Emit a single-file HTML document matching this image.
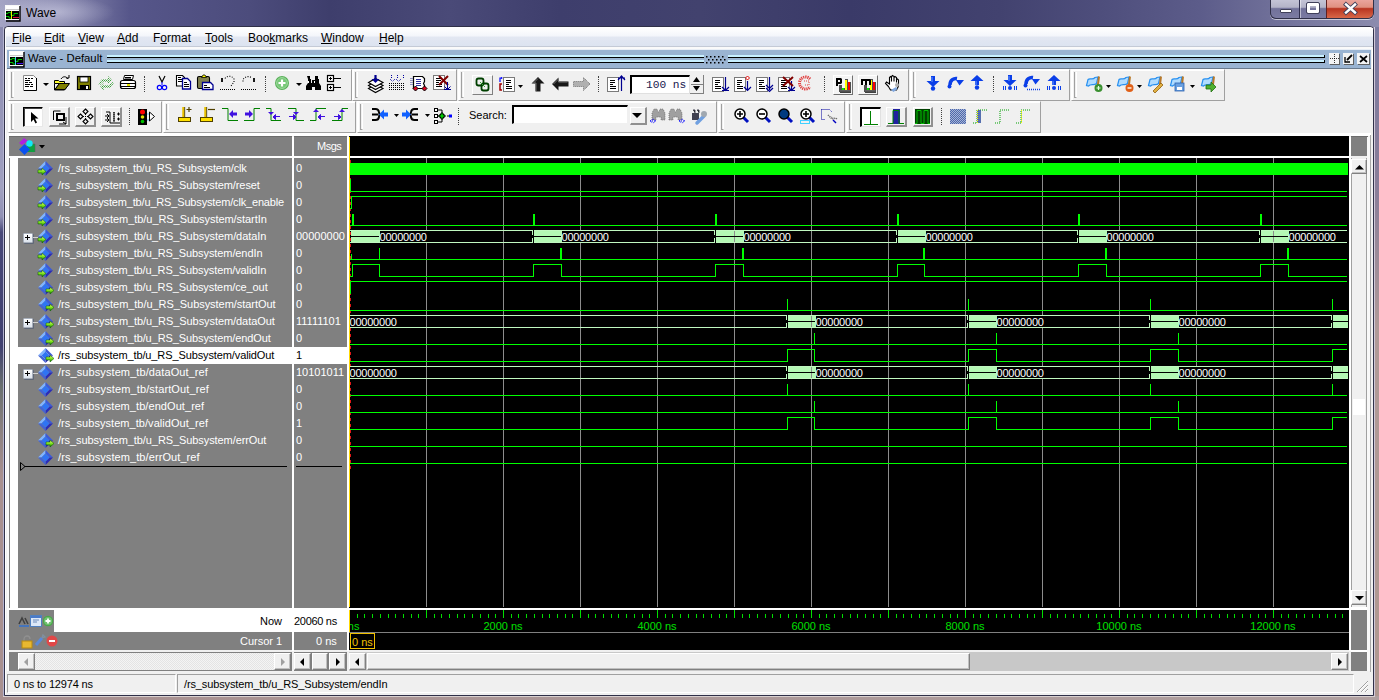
<!DOCTYPE html><html><head><meta charset="utf-8"><style>
*{margin:0;padding:0;box-sizing:border-box}
html,body{width:1379px;height:700px;overflow:hidden;background:#8a7f86;font-family:"Liberation Sans",sans-serif;font-size:11px;color:#000}
.ab{position:absolute}
.t{position:absolute;white-space:pre;line-height:1}
svg{position:absolute;overflow:visible}
.tb{position:absolute;border-top:1px solid #fff;border-left:1px solid #fff;border-right:1px solid #a0a0a0;border-bottom:1px solid #a0a0a0;box-shadow:1px 1px 0 #fff inset}
.hd{position:absolute;width:3px;border-left:1px solid #a0a0a0;border-right:1px solid #fff;border-bottom:1px solid #a0a0a0}
.sep{position:absolute;width:1px;border-left:1px dotted #404040}
.btn{position:absolute;background:#f0f0f0;border-top:1px solid #fff;border-left:1px solid #fff;border-right:1px solid #808080;border-bottom:1px solid #808080}

</style></head><body>
<div class="ab" style="left:0px;top:0px;width:1379px;height:700px;background:linear-gradient(180deg,#8e8aa6 0%,#9a8c96 60%,#a48e8e 100%)"></div>
<div class="ab" style="left:0px;top:0px;width:1379px;height:27px;background:linear-gradient(90deg,#a4a4c4 0.0%,#8a8ab0 4.4%,#56568a 9.4%,#4c4c7c 18.1%,#3e3e6c 23.9%,#4a4a78 32.6%,#3e3e6c 40.6%,#42426e 50.8%,#3a3a68 61.6%,#42426f 72.5%,#4e4e7c 79.8%,#5c5c8a 87.0%,#8c8cae 100.0%)"></div>
<div class="ab" style="left:0px;top:0px;width:200px;height:27px;background:radial-gradient(ellipse 60px 16px at 55px 12px,rgba(215,215,235,.55),rgba(215,215,235,0))"></div>
<div class="ab" style="left:0px;top:27px;width:4px;height:673px;background:linear-gradient(180deg,#8a8ab0 0.0%,#a0a0c0 23.8%,#9090b4 28.2%,#484878 30.5%,#404070 47.5%,#6a7070 53.5%,#8a8080 59.4%,#a89090 66.9%,#a89090 100.0%)"></div>
<div class="ab" style="left:3px;top:27px;width:1px;height:669px;background:#b4b4d0"></div>
<div class="ab" style="left:1374px;top:27px;width:5px;height:673px;background:linear-gradient(180deg,#7a7aa0 0%,#8a7e98 25%,#b09a98 45%,#b09890 100%)"></div>
<div class="ab" style="left:1374px;top:27px;width:1px;height:669px;background:#d0c8d8"></div>
<div class="ab" style="left:0px;top:696px;width:1379px;height:4px;background:linear-gradient(90deg,#a89090,#b0a0a0)"></div>
<div class="ab" style="left:3px;top:696px;width:1372px;height:1px;background:#d8d0d0"></div>
<svg style="left:5px;top:5px;" width="16" height="17" viewBox="0 0 16 17"><rect x="0" y="0" width="15" height="15" fill="#f8f8f8"/><path d="M15 1v15H1" stroke="#000" stroke-width="1.4" fill="none"/><rect x="1" y="1" width="13" height="3" fill="#fff"/><path d="M1 4.5h13" stroke="#c8c8c8"/><rect x="1" y="6" width="13" height="8" fill="#000"/><path d="M1 8.5h2v-1h3v3h3v-2h4M1 11.5h3v1.5h2" stroke="#00c000" fill="none"/><path d="M6.5 6v8" stroke="#f0f000"/><path d="M8 12.5h6" stroke="#e0104a"/></svg>
<div class="t" style="left:26px;top:7px;font-size:12px;color:#000">Wave</div>
<div class="ab" style="left:1270px;top:0px;width:104px;height:19px;border:1px solid #303048;border-top:none;border-radius:0 0 6px 6px;background:linear-gradient(180deg,#c4c4d6 0%,#b4b4c8 40%,#72729a 48%,#7a7aa2 100%);overflow:hidden;box-shadow:0 1px 0 rgba(255,255,255,.6)"><div class="ab" style="left:55px;top:0;width:48px;height:18px;background:linear-gradient(180deg,#eaa49c 0%,#e09080 40%,#b83420 48%,#d86848 100%);border-left:1px solid #602020"></div><div class="ab" style="left:28px;top:0;width:1px;height:18px;background:#303050;box-shadow:1px 0 0 rgba(255,255,255,.5)"></div></div>
<div class="ab" style="left:1280px;top:9px;width:12px;height:4px;background:#fff;border:1px solid #40405a;border-radius:1px"></div>
<div class="ab" style="left:1307px;top:3px;width:12px;height:10px;border:3px solid #fff;outline:1px solid #40405a;background:transparent;border-radius:1px"></div>
<svg style="left:1344px;top:3px;" width="13" height="11" viewBox="0 0 13 11"><path d="M2 1.5L11 9.5M11 1.5L2 9.5" stroke="#40405a" stroke-width="4.2" stroke-linecap="square"/><path d="M2 1.5L11 9.5M11 1.5L2 9.5" stroke="#fff" stroke-width="2.4" stroke-linecap="square"/></svg>
<div class="ab" style="left:4px;top:26px;width:1370px;height:670px;background:#f0f0f0;border:1px solid #303048;border-radius:4px 4px 0 0"></div>
<div class="ab" style="left:5px;top:27px;width:1368px;height:668px;border:1px solid #fff;border-radius:3px 3px 0 0"></div>
<div class="ab" style="left:6px;top:28px;width:1367px;height:19px;background:linear-gradient(180deg,#ffffff 0%,#f4f6fb 40%,#e2e7f2 50%,#dce3f0 100%)"></div>
<div class="ab" style="left:6px;top:46px;width:1367px;height:1px;background:#c4cad6"></div>
<div class="ab" style="left:6px;top:47px;width:1367px;height:2px;background:#fafafa"></div>
<div class="t" style="left:12px;top:32px;font-size:12px;color:#000"><u>F</u>ile</div>
<div class="t" style="left:44px;top:32px;font-size:12px;color:#000"><u>E</u>dit</div>
<div class="t" style="left:78px;top:32px;font-size:12px;color:#000"><u>V</u>iew</div>
<div class="t" style="left:117px;top:32px;font-size:12px;color:#000"><u>A</u>dd</div>
<div class="t" style="left:153px;top:32px;font-size:12px;color:#000">F<u>o</u>rmat</div>
<div class="t" style="left:205px;top:32px;font-size:12px;color:#000"><u>T</u>ools</div>
<div class="t" style="left:248px;top:32px;font-size:12px;color:#000">Boo<u>k</u>marks</div>
<div class="t" style="left:321px;top:32px;font-size:12px;color:#000"><u>W</u>indow</div>
<div class="t" style="left:379px;top:32px;font-size:12px;color:#000"><u>H</u>elp</div>
<div class="ab" style="left:7px;top:49px;width:1364px;height:20px;background:#9ab4d2;border-top:1px solid #e8eef6;border-bottom:1px solid #6a7a8c"></div>
<svg style="left:9px;top:51px;" width="16" height="17" viewBox="0 0 16 17"><rect x="0" y="0" width="15" height="15" fill="#f8f8f8"/><path d="M15 1v15H1" stroke="#000" stroke-width="1.4" fill="none"/><rect x="1" y="1" width="13" height="3" fill="#fff"/><path d="M1 4.5h13" stroke="#c8c8c8"/><rect x="1" y="6" width="13" height="8" fill="#000"/><path d="M1 8.5h2v-1h3v3h3v-2h4M1 11.5h3v1.5h2" stroke="#00c000" fill="none"/><path d="M6.5 6v8" stroke="#30e0f0"/><path d="M8 12.5h6" stroke="#4010f0"/></svg>
<div class="t" style="left:28px;top:53px;font-size:11.3px;color:#000">Wave - Default</div>
<div class="ab" style="left:107px;top:55px;width:597px;height:2px;background:#c8f0ff"></div>
<div class="ab" style="left:107px;top:57px;width:597px;height:1px;background:#000"></div>
<div class="ab" style="left:107px;top:60px;width:597px;height:2px;background:#c8f0ff"></div>
<div class="ab" style="left:107px;top:62px;width:597px;height:1px;background:#000"></div>
<div class="ab" style="left:728px;top:55px;width:597px;height:2px;background:#c8f0ff"></div>
<div class="ab" style="left:728px;top:57px;width:597px;height:1px;background:#000"></div>
<div class="ab" style="left:728px;top:60px;width:597px;height:2px;background:#c8f0ff"></div>
<div class="ab" style="left:728px;top:62px;width:597px;height:1px;background:#000"></div>
<div class="ab" style="left:1324px;top:55px;width:1px;height:3px;background:#000"></div>
<div class="ab" style="left:1324px;top:60px;width:1px;height:3px;background:#000"></div>
<svg style="left:705px;top:55px;" width="22" height="9" viewBox="0 0 22 9"><rect x="1" y="1" width="1.5" height="1.5" fill="#000"/><rect x="3" y="4" width="1.5" height="1.5" fill="#000"/><rect x="1" y="7" width="1.5" height="1.5" fill="#000"/><rect x="5" y="1" width="1.5" height="1.5" fill="#000"/><rect x="7" y="4" width="1.5" height="1.5" fill="#000"/><rect x="5" y="7" width="1.5" height="1.5" fill="#000"/><rect x="9" y="1" width="1.5" height="1.5" fill="#000"/><rect x="11" y="4" width="1.5" height="1.5" fill="#000"/><rect x="9" y="7" width="1.5" height="1.5" fill="#000"/><rect x="13" y="1" width="1.5" height="1.5" fill="#000"/><rect x="15" y="4" width="1.5" height="1.5" fill="#000"/><rect x="13" y="7" width="1.5" height="1.5" fill="#000"/><rect x="17" y="1" width="1.5" height="1.5" fill="#000"/><rect x="19" y="4" width="1.5" height="1.5" fill="#000"/><rect x="17" y="7" width="1.5" height="1.5" fill="#000"/></svg>
<div class="ab" style="left:1329px;top:53px;width:10px;height:11px;background:#f4f4f4;box-shadow:1px 1px 0 #606060"></div>
<div class="ab" style="left:1343px;top:53px;width:10px;height:11px;background:#f4f4f4;box-shadow:1px 1px 0 #606060"></div>
<div class="ab" style="left:1357px;top:53px;width:12px;height:11px;background:#f4f4f4;box-shadow:1px 1px 0 #606060"></div>
<svg style="left:1359px;top:55px;" width="9" height="8" viewBox="0 0 9 8"><path d="M1 1l7 6M8 1l-7 6" stroke="#000" stroke-width="1.7"/></svg>
<svg style="left:1344px;top:54px;" width="9" height="9" viewBox="0 0 9 9"><path d="M1 3v5h5" stroke="#000" fill="none" stroke-width="1.3"/><path d="M3 6l5-5" stroke="#000" stroke-width="1.8"/></svg>
<svg style="left:1330px;top:54px;" width="9" height="9" viewBox="0 0 9 9"><path d="M4.5 0v9M0 4.5h9" stroke="#000" stroke-width=".8" stroke-dasharray="1 1"/></svg>
<div class="ab" style="left:6px;top:69px;width:1367px;height:64px;background:#f0f0f0"></div>
<div class="tb" style="left:8px;top:69px;width:344px;height:32px"></div>
<div class="hd" style="left:11px;top:72px;height:26px"></div>
<div class="tb" style="left:352px;top:69px;width:105px;height:32px"></div>
<div class="hd" style="left:355px;top:72px;height:26px"></div>
<div class="tb" style="left:458px;top:69px;width:451px;height:32px"></div>
<div class="hd" style="left:461px;top:72px;height:26px"></div>
<div class="tb" style="left:910px;top:69px;width:160px;height:32px"></div>
<div class="hd" style="left:913px;top:72px;height:26px"></div>
<div class="tb" style="left:1071px;top:69px;width:154px;height:32px"></div>
<div class="hd" style="left:1074px;top:72px;height:26px"></div>
<div class="tb" style="left:8px;top:101px;width:154px;height:32px"></div>
<div class="hd" style="left:11px;top:104px;height:26px"></div>
<div class="tb" style="left:163px;top:101px;width:193px;height:32px"></div>
<div class="hd" style="left:166px;top:104px;height:26px"></div>
<div class="tb" style="left:357px;top:101px;width:360px;height:32px"></div>
<div class="hd" style="left:360px;top:104px;height:26px"></div>
<div class="tb" style="left:718px;top:101px;width:127px;height:32px"></div>
<div class="hd" style="left:721px;top:104px;height:26px"></div>
<div class="tb" style="left:846px;top:101px;width:195px;height:32px"></div>
<div class="hd" style="left:849px;top:104px;height:26px"></div>
<div class="sep" style="left:144px;top:76px;height:16px"></div>
<div class="sep" style="left:265px;top:76px;height:16px"></div>
<div class="sep" style="left:598px;top:76px;height:16px"></div>
<div class="sep" style="left:824px;top:76px;height:16px"></div>
<div class="sep" style="left:993px;top:76px;height:16px"></div>
<div class="sep" style="left:129px;top:108px;height:17px"></div>
<div class="sep" style="left:458px;top:108px;height:17px"></div>
<div class="sep" style="left:941px;top:108px;height:17px"></div>
<div class="ab" style="left:7px;top:133px;width:1366px;height:539px;background:#f0f0f0"></div>
<div class="ab" style="left:7px;top:133px;width:1364px;height:3px;background:#fff"></div>
<div class="ab" style="left:7px;top:133px;width:2px;height:538px;background:#fafafa"></div>
<div class="ab" style="left:9px;top:136px;width:283px;height:20px;background:#808080;border-top:1px solid #6c6c6c"></div>
<div class="ab" style="left:294px;top:136px;width:53px;height:20px;background:#808080;border-top:1px solid #6c6c6c"></div>
<div class="ab" style="left:349px;top:136px;width:1000px;height:20px;background:#000"></div>
<div class="ab" style="left:1351px;top:136px;width:17px;height:20px;background:#808080;border-top:1px solid #6c6c6c"></div>
<div class="t" style="left:317px;top:141px;color:#fff;font-size:11px;letter-spacing:-0.5px">Msgs</div>
<svg style="left:18px;top:137px;" width="18" height="18" viewBox="0 0 18 18"><path d="M6 1l4 3-6 4-3-2z" fill="#b020e0"/><rect x="9" y="7" width="8" height="8" fill="#10a040"/><path d="M9 7h8v8" fill="none" stroke="#606060" stroke-width=".6"/><circle cx="11.5" cy="6.5" r="3.2" fill="#10e8f8"/><path d="M6.5 7l5.5 5.5-5.5 5.5-5.5-5.5z" fill="#0a50f0"/></svg>
<svg style="left:39px;top:145px;" width="6" height="4" viewBox="0 0 6 4"><path d="M0 0h6l-3 3.5z" fill="#000"/></svg>
<div class="ab" style="left:9px;top:156px;width:1340px;height:2px;background:#fff"></div>
<div class="ab" style="left:292px;top:137px;width:2px;height:514px;background:#fff"></div>
<div class="ab" style="left:347px;top:137px;width:2px;height:514px;background:#fff"></div>
<div class="ab" style="left:1349px;top:137px;width:2px;height:514px;background:#fff"></div>
<div class="ab" style="left:9px;top:158px;width:283px;height:450px;background:#808080"></div>
<div class="ab" style="left:10px;top:158px;width:8px;height:451px;background:#fff"></div>
<div class="ab" style="left:294px;top:158px;width:53px;height:450px;background:#808080"></div>
<div class="ab" style="left:349px;top:158px;width:1000px;height:450px;background:#000"></div>
<svg style="left:38px;top:161px;" width="16" height="16" viewBox="0 0 16 16"><defs><linearGradient id="ag" x1="0" y1="0" x2="0" y2="1"><stop offset="0" stop-color="#f0ff80"/><stop offset=".5" stop-color="#80e020"/><stop offset="1" stop-color="#108000"/></linearGradient></defs><path d="M0 7.5L7.5 0V3.5L3.5 7.5Z" fill="#80b4ff"/><path d="M7.5 0L15 7.5H11.5L7.5 3.5Z" fill="#3c5ad8"/><path d="M15 7.5L7.5 15V11.5L11.5 7.5Z" fill="#2a2cb8"/><path d="M7.5 15L0 7.5H3.5L7.5 11.5Z" fill="#4464d4"/><path d="M7.5 3.5L11.5 7.5L7.5 11.5L3.5 7.5Z" fill="#2f74f4"/><path d="M0 9h4v-2l4 3.5-4 3.5v-2h-4z" fill="url(#ag)" stroke="#0a5a00" stroke-width=".5"/></svg>
<div class="t" style="left:58px;top:163px;color:#fff;font-size:11px;letter-spacing:-0.146px">/rs_subsystem_tb/u_RS_Subsystem/clk</div>
<div class="t" style="left:296px;top:163px;color:#fff;font-size:11px">0</div>
<svg style="left:38px;top:178px;" width="16" height="16" viewBox="0 0 16 16"><defs><linearGradient id="ag" x1="0" y1="0" x2="0" y2="1"><stop offset="0" stop-color="#f0ff80"/><stop offset=".5" stop-color="#80e020"/><stop offset="1" stop-color="#108000"/></linearGradient></defs><path d="M0 7.5L7.5 0V3.5L3.5 7.5Z" fill="#80b4ff"/><path d="M7.5 0L15 7.5H11.5L7.5 3.5Z" fill="#3c5ad8"/><path d="M15 7.5L7.5 15V11.5L11.5 7.5Z" fill="#2a2cb8"/><path d="M7.5 15L0 7.5H3.5L7.5 11.5Z" fill="#4464d4"/><path d="M7.5 3.5L11.5 7.5L7.5 11.5L3.5 7.5Z" fill="#2f74f4"/><path d="M0 9h4v-2l4 3.5-4 3.5v-2h-4z" fill="url(#ag)" stroke="#0a5a00" stroke-width=".5"/></svg>
<div class="t" style="left:58px;top:180px;color:#fff;font-size:11px;letter-spacing:-0.081px">/rs_subsystem_tb/u_RS_Subsystem/reset</div>
<div class="t" style="left:296px;top:180px;color:#fff;font-size:11px">0</div>
<svg style="left:38px;top:195px;" width="16" height="16" viewBox="0 0 16 16"><defs><linearGradient id="ag" x1="0" y1="0" x2="0" y2="1"><stop offset="0" stop-color="#f0ff80"/><stop offset=".5" stop-color="#80e020"/><stop offset="1" stop-color="#108000"/></linearGradient></defs><path d="M0 7.5L7.5 0V3.5L3.5 7.5Z" fill="#80b4ff"/><path d="M7.5 0L15 7.5H11.5L7.5 3.5Z" fill="#3c5ad8"/><path d="M15 7.5L7.5 15V11.5L11.5 7.5Z" fill="#2a2cb8"/><path d="M7.5 15L0 7.5H3.5L7.5 11.5Z" fill="#4464d4"/><path d="M7.5 3.5L11.5 7.5L7.5 11.5L3.5 7.5Z" fill="#2f74f4"/><path d="M0 9h4v-2l4 3.5-4 3.5v-2h-4z" fill="url(#ag)" stroke="#0a5a00" stroke-width=".5"/></svg>
<div class="t" style="left:58px;top:197px;color:#fff;font-size:11px;letter-spacing:-0.166px">/rs_subsystem_tb/u_RS_Subsystem/clk_enable</div>
<div class="t" style="left:296px;top:197px;color:#fff;font-size:11px">0</div>
<svg style="left:38px;top:212px;" width="16" height="16" viewBox="0 0 16 16"><defs><linearGradient id="ag" x1="0" y1="0" x2="0" y2="1"><stop offset="0" stop-color="#f0ff80"/><stop offset=".5" stop-color="#80e020"/><stop offset="1" stop-color="#108000"/></linearGradient></defs><path d="M0 7.5L7.5 0V3.5L3.5 7.5Z" fill="#80b4ff"/><path d="M7.5 0L15 7.5H11.5L7.5 3.5Z" fill="#3c5ad8"/><path d="M15 7.5L7.5 15V11.5L11.5 7.5Z" fill="#2a2cb8"/><path d="M7.5 15L0 7.5H3.5L7.5 11.5Z" fill="#4464d4"/><path d="M7.5 3.5L11.5 7.5L7.5 11.5L3.5 7.5Z" fill="#2f74f4"/><path d="M0 9h4v-2l4 3.5-4 3.5v-2h-4z" fill="url(#ag)" stroke="#0a5a00" stroke-width=".5"/></svg>
<div class="t" style="left:58px;top:214px;color:#fff;font-size:11px;letter-spacing:-0.055px">/rs_subsystem_tb/u_RS_Subsystem/startIn</div>
<div class="t" style="left:296px;top:214px;color:#fff;font-size:11px">0</div>
<svg style="left:38px;top:229px;" width="16" height="16" viewBox="0 0 16 16"><defs><linearGradient id="ag" x1="0" y1="0" x2="0" y2="1"><stop offset="0" stop-color="#f0ff80"/><stop offset=".5" stop-color="#80e020"/><stop offset="1" stop-color="#108000"/></linearGradient></defs><path d="M0 7.5L7.5 0V3.5L3.5 7.5Z" fill="#80b4ff"/><path d="M7.5 0L15 7.5H11.5L7.5 3.5Z" fill="#3c5ad8"/><path d="M15 7.5L7.5 15V11.5L11.5 7.5Z" fill="#2a2cb8"/><path d="M7.5 15L0 7.5H3.5L7.5 11.5Z" fill="#4464d4"/><path d="M7.5 3.5L11.5 7.5L7.5 11.5L3.5 7.5Z" fill="#2f74f4"/><path d="M0 9h4v-2l4 3.5-4 3.5v-2h-4z" fill="url(#ag)" stroke="#0a5a00" stroke-width=".5"/></svg>
<div class="t" style="left:58px;top:231px;color:#fff;font-size:11px;letter-spacing:-0.07px">/rs_subsystem_tb/u_RS_Subsystem/dataIn</div>
<div class="t" style="left:296px;top:231px;color:#fff;font-size:11px">00000000</div>
<div class="ab" style="left:23px;top:233px;width:10px;height:10px;background:linear-gradient(180deg,#ffffff,#dde4ee);border:1px solid #a8b0bc;border-radius:1px;box-shadow:1px 1px 0 #606878"></div>
<div class="ab" style="left:25px;top:237px;width:5px;height:1px;background:#000"></div>
<div class="ab" style="left:27px;top:235px;width:1px;height:5px;background:#000"></div>
<div class="ab" style="left:33px;top:237px;width:5px;height:1px;background:#d0d0d0"></div>
<svg style="left:38px;top:246px;" width="16" height="16" viewBox="0 0 16 16"><defs><linearGradient id="ag" x1="0" y1="0" x2="0" y2="1"><stop offset="0" stop-color="#f0ff80"/><stop offset=".5" stop-color="#80e020"/><stop offset="1" stop-color="#108000"/></linearGradient></defs><path d="M0 7.5L7.5 0V3.5L3.5 7.5Z" fill="#80b4ff"/><path d="M7.5 0L15 7.5H11.5L7.5 3.5Z" fill="#3c5ad8"/><path d="M15 7.5L7.5 15V11.5L11.5 7.5Z" fill="#2a2cb8"/><path d="M7.5 15L0 7.5H3.5L7.5 11.5Z" fill="#4464d4"/><path d="M7.5 3.5L11.5 7.5L7.5 11.5L3.5 7.5Z" fill="#2f74f4"/><path d="M0 9h4v-2l4 3.5-4 3.5v-2h-4z" fill="url(#ag)" stroke="#0a5a00" stroke-width=".5"/></svg>
<div class="t" style="left:58px;top:248px;color:#fff;font-size:11px;letter-spacing:-0.094px">/rs_subsystem_tb/u_RS_Subsystem/endIn</div>
<div class="t" style="left:296px;top:248px;color:#fff;font-size:11px">0</div>
<svg style="left:38px;top:263px;" width="16" height="16" viewBox="0 0 16 16"><defs><linearGradient id="ag" x1="0" y1="0" x2="0" y2="1"><stop offset="0" stop-color="#f0ff80"/><stop offset=".5" stop-color="#80e020"/><stop offset="1" stop-color="#108000"/></linearGradient></defs><path d="M0 7.5L7.5 0V3.5L3.5 7.5Z" fill="#80b4ff"/><path d="M7.5 0L15 7.5H11.5L7.5 3.5Z" fill="#3c5ad8"/><path d="M15 7.5L7.5 15V11.5L11.5 7.5Z" fill="#2a2cb8"/><path d="M7.5 15L0 7.5H3.5L7.5 11.5Z" fill="#4464d4"/><path d="M7.5 3.5L11.5 7.5L7.5 11.5L3.5 7.5Z" fill="#2f74f4"/><path d="M0 9h4v-2l4 3.5-4 3.5v-2h-4z" fill="url(#ag)" stroke="#0a5a00" stroke-width=".5"/></svg>
<div class="t" style="left:58px;top:265px;color:#fff;font-size:11px;letter-spacing:-0.099px">/rs_subsystem_tb/u_RS_Subsystem/validIn</div>
<div class="t" style="left:296px;top:265px;color:#fff;font-size:11px">0</div>
<svg style="left:38px;top:280px;" width="16" height="16" viewBox="0 0 16 16"><defs><linearGradient id="ag" x1="0" y1="0" x2="0" y2="1"><stop offset="0" stop-color="#f0ff80"/><stop offset=".5" stop-color="#80e020"/><stop offset="1" stop-color="#108000"/></linearGradient></defs><path d="M0 7.5L7.5 0V3.5L3.5 7.5Z" fill="#80b4ff"/><path d="M7.5 0L15 7.5H11.5L7.5 3.5Z" fill="#3c5ad8"/><path d="M15 7.5L7.5 15V11.5L11.5 7.5Z" fill="#2a2cb8"/><path d="M7.5 15L0 7.5H3.5L7.5 11.5Z" fill="#4464d4"/><path d="M7.5 3.5L11.5 7.5L7.5 11.5L3.5 7.5Z" fill="#2f74f4"/><path d="M8 9h4v-2l4 3.5-4 3.5v-2h-4z" fill="url(#ag)" stroke="#0a5a00" stroke-width=".5"/></svg>
<div class="t" style="left:58px;top:282px;color:#fff;font-size:11px;letter-spacing:-0.1px">/rs_subsystem_tb/u_RS_Subsystem/ce_out</div>
<div class="t" style="left:296px;top:282px;color:#fff;font-size:11px">0</div>
<svg style="left:38px;top:297px;" width="16" height="16" viewBox="0 0 16 16"><defs><linearGradient id="ag" x1="0" y1="0" x2="0" y2="1"><stop offset="0" stop-color="#f0ff80"/><stop offset=".5" stop-color="#80e020"/><stop offset="1" stop-color="#108000"/></linearGradient></defs><path d="M0 7.5L7.5 0V3.5L3.5 7.5Z" fill="#80b4ff"/><path d="M7.5 0L15 7.5H11.5L7.5 3.5Z" fill="#3c5ad8"/><path d="M15 7.5L7.5 15V11.5L11.5 7.5Z" fill="#2a2cb8"/><path d="M7.5 15L0 7.5H3.5L7.5 11.5Z" fill="#4464d4"/><path d="M7.5 3.5L11.5 7.5L7.5 11.5L3.5 7.5Z" fill="#2f74f4"/><path d="M8 9h4v-2l4 3.5-4 3.5v-2h-4z" fill="url(#ag)" stroke="#0a5a00" stroke-width=".5"/></svg>
<div class="t" style="left:58px;top:299px;color:#fff;font-size:11px;letter-spacing:-0.05px">/rs_subsystem_tb/u_RS_Subsystem/startOut</div>
<div class="t" style="left:296px;top:299px;color:#fff;font-size:11px">0</div>
<svg style="left:38px;top:314px;" width="16" height="16" viewBox="0 0 16 16"><defs><linearGradient id="ag" x1="0" y1="0" x2="0" y2="1"><stop offset="0" stop-color="#f0ff80"/><stop offset=".5" stop-color="#80e020"/><stop offset="1" stop-color="#108000"/></linearGradient></defs><path d="M0 7.5L7.5 0V3.5L3.5 7.5Z" fill="#80b4ff"/><path d="M7.5 0L15 7.5H11.5L7.5 3.5Z" fill="#3c5ad8"/><path d="M15 7.5L7.5 15V11.5L11.5 7.5Z" fill="#2a2cb8"/><path d="M7.5 15L0 7.5H3.5L7.5 11.5Z" fill="#4464d4"/><path d="M7.5 3.5L11.5 7.5L7.5 11.5L3.5 7.5Z" fill="#2f74f4"/><path d="M8 9h4v-2l4 3.5-4 3.5v-2h-4z" fill="url(#ag)" stroke="#0a5a00" stroke-width=".5"/></svg>
<div class="t" style="left:58px;top:316px;color:#fff;font-size:11px;letter-spacing:-0.072px">/rs_subsystem_tb/u_RS_Subsystem/dataOut</div>
<div class="t" style="left:296px;top:316px;color:#fff;font-size:11px">11111101</div>
<div class="ab" style="left:23px;top:318px;width:10px;height:10px;background:linear-gradient(180deg,#ffffff,#dde4ee);border:1px solid #a8b0bc;border-radius:1px;box-shadow:1px 1px 0 #606878"></div>
<div class="ab" style="left:25px;top:322px;width:5px;height:1px;background:#000"></div>
<div class="ab" style="left:27px;top:320px;width:1px;height:5px;background:#000"></div>
<div class="ab" style="left:33px;top:322px;width:5px;height:1px;background:#d0d0d0"></div>
<svg style="left:38px;top:331px;" width="16" height="16" viewBox="0 0 16 16"><defs><linearGradient id="ag" x1="0" y1="0" x2="0" y2="1"><stop offset="0" stop-color="#f0ff80"/><stop offset=".5" stop-color="#80e020"/><stop offset="1" stop-color="#108000"/></linearGradient></defs><path d="M0 7.5L7.5 0V3.5L3.5 7.5Z" fill="#80b4ff"/><path d="M7.5 0L15 7.5H11.5L7.5 3.5Z" fill="#3c5ad8"/><path d="M15 7.5L7.5 15V11.5L11.5 7.5Z" fill="#2a2cb8"/><path d="M7.5 15L0 7.5H3.5L7.5 11.5Z" fill="#4464d4"/><path d="M7.5 3.5L11.5 7.5L7.5 11.5L3.5 7.5Z" fill="#2f74f4"/><path d="M8 9h4v-2l4 3.5-4 3.5v-2h-4z" fill="url(#ag)" stroke="#0a5a00" stroke-width=".5"/></svg>
<div class="t" style="left:58px;top:333px;color:#fff;font-size:11px;letter-spacing:-0.096px">/rs_subsystem_tb/u_RS_Subsystem/endOut</div>
<div class="t" style="left:296px;top:333px;color:#fff;font-size:11px">0</div>
<div class="ab" style="left:18px;top:347px;width:274px;height:17px;background:#fff"></div>
<div class="ab" style="left:294px;top:347px;width:53px;height:17px;background:#fff"></div>
<svg style="left:38px;top:348px;" width="16" height="16" viewBox="0 0 16 16"><defs><linearGradient id="ag" x1="0" y1="0" x2="0" y2="1"><stop offset="0" stop-color="#f0ff80"/><stop offset=".5" stop-color="#80e020"/><stop offset="1" stop-color="#108000"/></linearGradient></defs><path d="M0 7.5L7.5 0V3.5L3.5 7.5Z" fill="#80b4ff"/><path d="M7.5 0L15 7.5H11.5L7.5 3.5Z" fill="#3c5ad8"/><path d="M15 7.5L7.5 15V11.5L11.5 7.5Z" fill="#2a2cb8"/><path d="M7.5 15L0 7.5H3.5L7.5 11.5Z" fill="#4464d4"/><path d="M7.5 3.5L11.5 7.5L7.5 11.5L3.5 7.5Z" fill="#2f74f4"/><path d="M8 9h4v-2l4 3.5-4 3.5v-2h-4z" fill="url(#ag)" stroke="#0a5a00" stroke-width=".5"/></svg>
<div class="t" style="left:58px;top:350px;color:#000;font-size:11px;letter-spacing:-0.113px">/rs_subsystem_tb/u_RS_Subsystem/validOut</div>
<div class="t" style="left:296px;top:350px;color:#000;font-size:11px">1</div>
<svg style="left:38px;top:365px;" width="16" height="16" viewBox="0 0 16 16"><defs><linearGradient id="ag" x1="0" y1="0" x2="0" y2="1"><stop offset="0" stop-color="#f0ff80"/><stop offset=".5" stop-color="#80e020"/><stop offset="1" stop-color="#108000"/></linearGradient></defs><path d="M0 7.5L7.5 0V3.5L3.5 7.5Z" fill="#80b4ff"/><path d="M7.5 0L15 7.5H11.5L7.5 3.5Z" fill="#3c5ad8"/><path d="M15 7.5L7.5 15V11.5L11.5 7.5Z" fill="#2a2cb8"/><path d="M7.5 15L0 7.5H3.5L7.5 11.5Z" fill="#4464d4"/><path d="M7.5 3.5L11.5 7.5L7.5 11.5L3.5 7.5Z" fill="#2f74f4"/></svg>
<div class="t" style="left:58px;top:367px;color:#fff;font-size:11px;letter-spacing:0.094px">/rs_subsystem_tb/dataOut_ref</div>
<div class="t" style="left:296px;top:367px;color:#fff;font-size:11px">10101011</div>
<div class="ab" style="left:23px;top:369px;width:10px;height:10px;background:linear-gradient(180deg,#ffffff,#dde4ee);border:1px solid #a8b0bc;border-radius:1px;box-shadow:1px 1px 0 #606878"></div>
<div class="ab" style="left:25px;top:373px;width:5px;height:1px;background:#000"></div>
<div class="ab" style="left:27px;top:371px;width:1px;height:5px;background:#000"></div>
<div class="ab" style="left:33px;top:373px;width:5px;height:1px;background:#d0d0d0"></div>
<svg style="left:38px;top:382px;" width="16" height="16" viewBox="0 0 16 16"><defs><linearGradient id="ag" x1="0" y1="0" x2="0" y2="1"><stop offset="0" stop-color="#f0ff80"/><stop offset=".5" stop-color="#80e020"/><stop offset="1" stop-color="#108000"/></linearGradient></defs><path d="M0 7.5L7.5 0V3.5L3.5 7.5Z" fill="#80b4ff"/><path d="M7.5 0L15 7.5H11.5L7.5 3.5Z" fill="#3c5ad8"/><path d="M15 7.5L7.5 15V11.5L11.5 7.5Z" fill="#2a2cb8"/><path d="M7.5 15L0 7.5H3.5L7.5 11.5Z" fill="#4464d4"/><path d="M7.5 3.5L11.5 7.5L7.5 11.5L3.5 7.5Z" fill="#2f74f4"/></svg>
<div class="t" style="left:58px;top:384px;color:#fff;font-size:11px;letter-spacing:0.123px">/rs_subsystem_tb/startOut_ref</div>
<div class="t" style="left:296px;top:384px;color:#fff;font-size:11px">0</div>
<svg style="left:38px;top:399px;" width="16" height="16" viewBox="0 0 16 16"><defs><linearGradient id="ag" x1="0" y1="0" x2="0" y2="1"><stop offset="0" stop-color="#f0ff80"/><stop offset=".5" stop-color="#80e020"/><stop offset="1" stop-color="#108000"/></linearGradient></defs><path d="M0 7.5L7.5 0V3.5L3.5 7.5Z" fill="#80b4ff"/><path d="M7.5 0L15 7.5H11.5L7.5 3.5Z" fill="#3c5ad8"/><path d="M15 7.5L7.5 15V11.5L11.5 7.5Z" fill="#2a2cb8"/><path d="M7.5 15L0 7.5H3.5L7.5 11.5Z" fill="#4464d4"/><path d="M7.5 3.5L11.5 7.5L7.5 11.5L3.5 7.5Z" fill="#2f74f4"/></svg>
<div class="t" style="left:58px;top:401px;color:#fff;font-size:11px;letter-spacing:0.07px">/rs_subsystem_tb/endOut_ref</div>
<div class="t" style="left:296px;top:401px;color:#fff;font-size:11px">0</div>
<svg style="left:38px;top:416px;" width="16" height="16" viewBox="0 0 16 16"><defs><linearGradient id="ag" x1="0" y1="0" x2="0" y2="1"><stop offset="0" stop-color="#f0ff80"/><stop offset=".5" stop-color="#80e020"/><stop offset="1" stop-color="#108000"/></linearGradient></defs><path d="M0 7.5L7.5 0V3.5L3.5 7.5Z" fill="#80b4ff"/><path d="M7.5 0L15 7.5H11.5L7.5 3.5Z" fill="#3c5ad8"/><path d="M15 7.5L7.5 15V11.5L11.5 7.5Z" fill="#2a2cb8"/><path d="M7.5 15L0 7.5H3.5L7.5 11.5Z" fill="#4464d4"/><path d="M7.5 3.5L11.5 7.5L7.5 11.5L3.5 7.5Z" fill="#2f74f4"/></svg>
<div class="t" style="left:58px;top:418px;color:#fff;font-size:11px;letter-spacing:0.049px">/rs_subsystem_tb/validOut_ref</div>
<div class="t" style="left:296px;top:418px;color:#fff;font-size:11px">1</div>
<svg style="left:38px;top:433px;" width="16" height="16" viewBox="0 0 16 16"><defs><linearGradient id="ag" x1="0" y1="0" x2="0" y2="1"><stop offset="0" stop-color="#f0ff80"/><stop offset=".5" stop-color="#80e020"/><stop offset="1" stop-color="#108000"/></linearGradient></defs><path d="M0 7.5L7.5 0V3.5L3.5 7.5Z" fill="#80b4ff"/><path d="M7.5 0L15 7.5H11.5L7.5 3.5Z" fill="#3c5ad8"/><path d="M15 7.5L7.5 15V11.5L11.5 7.5Z" fill="#2a2cb8"/><path d="M7.5 15L0 7.5H3.5L7.5 11.5Z" fill="#4464d4"/><path d="M7.5 3.5L11.5 7.5L7.5 11.5L3.5 7.5Z" fill="#2f74f4"/><path d="M8 9h4v-2l4 3.5-4 3.5v-2h-4z" fill="url(#ag)" stroke="#0a5a00" stroke-width=".5"/></svg>
<div class="t" style="left:58px;top:435px;color:#fff;font-size:11px;letter-spacing:-0.085px">/rs_subsystem_tb/u_RS_Subsystem/errOut</div>
<div class="t" style="left:296px;top:435px;color:#fff;font-size:11px">0</div>
<svg style="left:38px;top:450px;" width="16" height="16" viewBox="0 0 16 16"><defs><linearGradient id="ag" x1="0" y1="0" x2="0" y2="1"><stop offset="0" stop-color="#f0ff80"/><stop offset=".5" stop-color="#80e020"/><stop offset="1" stop-color="#108000"/></linearGradient></defs><path d="M0 7.5L7.5 0V3.5L3.5 7.5Z" fill="#80b4ff"/><path d="M7.5 0L15 7.5H11.5L7.5 3.5Z" fill="#3c5ad8"/><path d="M15 7.5L7.5 15V11.5L11.5 7.5Z" fill="#2a2cb8"/><path d="M7.5 15L0 7.5H3.5L7.5 11.5Z" fill="#4464d4"/><path d="M7.5 3.5L11.5 7.5L7.5 11.5L3.5 7.5Z" fill="#2f74f4"/></svg>
<div class="t" style="left:58px;top:452px;color:#fff;font-size:11px;letter-spacing:0.086px">/rs_subsystem_tb/errOut_ref</div>
<div class="t" style="left:296px;top:452px;color:#fff;font-size:11px">0</div>
<div class="ab" style="left:20px;top:466px;width:267px;height:1px;background:#000"></div>
<svg style="left:20px;top:462px;" width="6" height="9" viewBox="0 0 6 9"><path d="M.5 .5L5 4.5L.5 8.5Z" fill="#808080" stroke="#000"/></svg>
<div class="ab" style="left:296px;top:466px;width:46px;height:1px;background:#000"></div>
<svg style="left:0px;top:0px;left:0;top:0;shape-rendering:crispEdges" width="1379" height="700" viewBox="0 0 1379 700"><path d="M350.5 160V470" stroke="#e01818" stroke-dasharray="3 3"/><rect x="351" y="230" width="29" height="13" fill="#b4f8b4"/><rect x="534" y="230" width="28" height="13" fill="#b4f8b4"/><rect x="716" y="230" width="28" height="13" fill="#b4f8b4"/><rect x="898" y="230" width="28" height="13" fill="#b4f8b4"/><rect x="1079" y="230" width="28" height="13" fill="#b4f8b4"/><rect x="1261" y="230" width="28" height="13" fill="#b4f8b4"/><rect x="788" y="315" width="28" height="13" fill="#b4f8b4"/><rect x="969" y="315" width="28" height="13" fill="#b4f8b4"/><rect x="1151" y="315" width="28" height="13" fill="#b4f8b4"/><rect x="1333" y="315" width="15" height="13" fill="#b4f8b4"/><rect x="788" y="366" width="28" height="13" fill="#b4f8b4"/><rect x="969" y="366" width="28" height="13" fill="#b4f8b4"/><rect x="1151" y="366" width="28" height="13" fill="#b4f8b4"/><rect x="1333" y="366" width="15" height="13" fill="#b4f8b4"/><path d="M426.5 158V607" stroke="#8c8c8c" stroke-width="1"/><path d="M503.5 158V607" stroke="#8c8c8c" stroke-width="1"/><path d="M580.5 158V607" stroke="#8c8c8c" stroke-width="1"/><path d="M657.5 158V607" stroke="#8c8c8c" stroke-width="1"/><path d="M734.5 158V607" stroke="#8c8c8c" stroke-width="1"/><path d="M811.5 158V607" stroke="#8c8c8c" stroke-width="1"/><path d="M888.5 158V607" stroke="#8c8c8c" stroke-width="1"/><path d="M965.5 158V607" stroke="#8c8c8c" stroke-width="1"/><path d="M1042.5 158V607" stroke="#8c8c8c" stroke-width="1"/><path d="M1119.5 158V607" stroke="#8c8c8c" stroke-width="1"/><path d="M1196.5 158V607" stroke="#8c8c8c" stroke-width="1"/><path d="M1273.5 158V607" stroke="#8c8c8c" stroke-width="1"/><rect x="350" y="163" width="998" height="12" fill="#00ff00"/><path d="M350 179.5H350.5V191.5H1347" stroke="#00ff00" stroke-width="1" fill="none" shape-rendering="crispEdges"/><path d="M350 208.5H351.5V196.5H1347" stroke="#00ff00" stroke-width="1" fill="none" shape-rendering="crispEdges"/><path d="M350 225.5H1347" stroke="#00ff00" stroke-width="1"/><rect x="352" y="214" width="2" height="12" fill="#00ff00"/><rect x="533" y="214" width="2" height="12" fill="#00ff00"/><rect x="715" y="214" width="2" height="12" fill="#00ff00"/><rect x="897" y="214" width="2" height="12" fill="#00ff00"/><rect x="1078" y="214" width="2" height="12" fill="#00ff00"/><rect x="1260" y="214" width="2" height="12" fill="#00ff00"/><path d="M350 259.5H1347" stroke="#00ff00" stroke-width="1"/><rect x="560" y="248" width="2" height="12" fill="#00ff00"/><rect x="742" y="248" width="2" height="12" fill="#00ff00"/><rect x="923" y="248" width="2" height="12" fill="#00ff00"/><rect x="1105" y="248" width="2" height="12" fill="#00ff00"/><rect x="1287" y="248" width="2" height="12" fill="#00ff00"/><rect x="379" y="248" width="1" height="12" fill="#00ff00"/><rect x="351" y="254" width="1" height="6" fill="#00ff00"/><path d="M350 276.5H352.5V264.5H379.5V276.5H533.5V264.5H561.5V276.5H715.5V264.5H743.5V276.5H897.5V264.5H924.5V276.5H1078.5V264.5H1106.5V276.5H1260.5V264.5H1288.5V276.5H1347" stroke="#00ff00" stroke-width="1" fill="none" shape-rendering="crispEdges"/><path d="M350 293.5H350.5V281.5H1347" stroke="#00ff00" stroke-width="1" fill="none" shape-rendering="crispEdges"/><path d="M350 230.5H533" stroke="#c0f8c0" stroke-width="1"/><path d="M350 242.5H533" stroke="#c0f8c0" stroke-width="1"/><path d="M534 230.5H715" stroke="#c0f8c0" stroke-width="1"/><path d="M534 242.5H715" stroke="#c0f8c0" stroke-width="1"/><path d="M716 230.5H897" stroke="#c0f8c0" stroke-width="1"/><path d="M716 242.5H897" stroke="#c0f8c0" stroke-width="1"/><path d="M898 230.5H1078" stroke="#c0f8c0" stroke-width="1"/><path d="M898 242.5H1078" stroke="#c0f8c0" stroke-width="1"/><path d="M1079 230.5H1260" stroke="#c0f8c0" stroke-width="1"/><path d="M1079 242.5H1260" stroke="#c0f8c0" stroke-width="1"/><path d="M1261 230.5H1347" stroke="#c0f8c0" stroke-width="1"/><path d="M1261 242.5H1347" stroke="#c0f8c0" stroke-width="1"/><path d="M532.5 230V235" stroke="#c0f8c0" stroke-width="1"/><path d="M532.5 238V243" stroke="#c0f8c0" stroke-width="1"/><path d="M714.5 230V235" stroke="#c0f8c0" stroke-width="1"/><path d="M714.5 238V243" stroke="#c0f8c0" stroke-width="1"/><path d="M896.5 230V235" stroke="#c0f8c0" stroke-width="1"/><path d="M896.5 238V243" stroke="#c0f8c0" stroke-width="1"/><path d="M1077.5 230V235" stroke="#c0f8c0" stroke-width="1"/><path d="M1077.5 238V243" stroke="#c0f8c0" stroke-width="1"/><path d="M1259.5 230V235" stroke="#c0f8c0" stroke-width="1"/><path d="M1259.5 238V243" stroke="#c0f8c0" stroke-width="1"/><path d="M351 236.5H379" stroke="#000" stroke-width="1"/><path d="M534 236.5H561" stroke="#000" stroke-width="1"/><path d="M716 236.5H743" stroke="#000" stroke-width="1"/><path d="M898 236.5H925" stroke="#000" stroke-width="1"/><path d="M1079 236.5H1106" stroke="#000" stroke-width="1"/><path d="M1261 236.5H1288" stroke="#000" stroke-width="1"/><rect x="380" y="231" width="48" height="11" fill="#000"/><text x="379.5" y="241" fill="#fff" font-size="11" letter-spacing="-0.22" font-family="Liberation Sans">00000000</text><rect x="562" y="231" width="48" height="11" fill="#000"/><text x="561.5" y="241" fill="#fff" font-size="11" letter-spacing="-0.22" font-family="Liberation Sans">00000000</text><rect x="744" y="231" width="48" height="11" fill="#000"/><text x="743.5" y="241" fill="#fff" font-size="11" letter-spacing="-0.22" font-family="Liberation Sans">00000000</text><rect x="926" y="231" width="48" height="11" fill="#000"/><text x="925.5" y="241" fill="#fff" font-size="11" letter-spacing="-0.22" font-family="Liberation Sans">00000000</text><rect x="1107" y="231" width="48" height="11" fill="#000"/><text x="1106.5" y="241" fill="#fff" font-size="11" letter-spacing="-0.22" font-family="Liberation Sans">00000000</text><rect x="1289" y="231" width="48" height="11" fill="#000"/><text x="1288.5" y="241" fill="#fff" font-size="11" letter-spacing="-0.22" font-family="Liberation Sans">00000000</text><path d="M350 310.5H1347" stroke="#00ff00" stroke-width="1"/><rect x="787" y="299" width="1" height="12" fill="#00ff00"/><rect x="968" y="299" width="1" height="12" fill="#00ff00"/><rect x="1150" y="299" width="1" height="12" fill="#00ff00"/><rect x="1332" y="299" width="1" height="12" fill="#00ff00"/><path d="M350 315.5H787" stroke="#c0f8c0" stroke-width="1"/><path d="M350 327.5H787" stroke="#c0f8c0" stroke-width="1"/><path d="M788 315.5H968" stroke="#c0f8c0" stroke-width="1"/><path d="M788 327.5H968" stroke="#c0f8c0" stroke-width="1"/><path d="M969 315.5H1150" stroke="#c0f8c0" stroke-width="1"/><path d="M969 327.5H1150" stroke="#c0f8c0" stroke-width="1"/><path d="M1151 315.5H1332" stroke="#c0f8c0" stroke-width="1"/><path d="M1151 327.5H1332" stroke="#c0f8c0" stroke-width="1"/><path d="M1333 315.5H1347" stroke="#c0f8c0" stroke-width="1"/><path d="M1333 327.5H1347" stroke="#c0f8c0" stroke-width="1"/><path d="M786.5 315V320" stroke="#c0f8c0" stroke-width="1"/><path d="M786.5 323V328" stroke="#c0f8c0" stroke-width="1"/><path d="M967.5 315V320" stroke="#c0f8c0" stroke-width="1"/><path d="M967.5 323V328" stroke="#c0f8c0" stroke-width="1"/><path d="M1149.5 315V320" stroke="#c0f8c0" stroke-width="1"/><path d="M1149.5 323V328" stroke="#c0f8c0" stroke-width="1"/><path d="M1331.5 315V320" stroke="#c0f8c0" stroke-width="1"/><path d="M1331.5 323V328" stroke="#c0f8c0" stroke-width="1"/><path d="M788 321.5H815" stroke="#000" stroke-width="1"/><path d="M969 321.5H996" stroke="#000" stroke-width="1"/><path d="M1151 321.5H1178" stroke="#000" stroke-width="1"/><path d="M1333 321.5H1348" stroke="#000" stroke-width="1"/><rect x="350" y="316" width="48" height="11" fill="#000"/><text x="349.5" y="326" fill="#fff" font-size="11" letter-spacing="-0.22" font-family="Liberation Sans">00000000</text><rect x="816" y="316" width="48" height="11" fill="#000"/><text x="815.5" y="326" fill="#fff" font-size="11" letter-spacing="-0.22" font-family="Liberation Sans">00000000</text><rect x="997" y="316" width="48" height="11" fill="#000"/><text x="996.5" y="326" fill="#fff" font-size="11" letter-spacing="-0.22" font-family="Liberation Sans">00000000</text><rect x="1179" y="316" width="48" height="11" fill="#000"/><text x="1178.5" y="326" fill="#fff" font-size="11" letter-spacing="-0.22" font-family="Liberation Sans">00000000</text><path d="M350 344.5H1347" stroke="#00ff00" stroke-width="1"/><rect x="814" y="333" width="1" height="12" fill="#00ff00"/><rect x="996" y="333" width="1" height="12" fill="#00ff00"/><rect x="1178" y="333" width="1" height="12" fill="#00ff00"/><path d="M350 361.5H787.5V349.5H814.5V361.5H968.5V349.5H996.5V361.5H1150.5V349.5H1178.5V361.5H1332.5V349.5H1347" stroke="#00ff00" stroke-width="1" fill="none" shape-rendering="crispEdges"/><path d="M350 366.5H787" stroke="#c0f8c0" stroke-width="1"/><path d="M350 378.5H787" stroke="#c0f8c0" stroke-width="1"/><path d="M788 366.5H968" stroke="#c0f8c0" stroke-width="1"/><path d="M788 378.5H968" stroke="#c0f8c0" stroke-width="1"/><path d="M969 366.5H1150" stroke="#c0f8c0" stroke-width="1"/><path d="M969 378.5H1150" stroke="#c0f8c0" stroke-width="1"/><path d="M1151 366.5H1332" stroke="#c0f8c0" stroke-width="1"/><path d="M1151 378.5H1332" stroke="#c0f8c0" stroke-width="1"/><path d="M1333 366.5H1347" stroke="#c0f8c0" stroke-width="1"/><path d="M1333 378.5H1347" stroke="#c0f8c0" stroke-width="1"/><path d="M786.5 366V371" stroke="#c0f8c0" stroke-width="1"/><path d="M786.5 374V379" stroke="#c0f8c0" stroke-width="1"/><path d="M967.5 366V371" stroke="#c0f8c0" stroke-width="1"/><path d="M967.5 374V379" stroke="#c0f8c0" stroke-width="1"/><path d="M1149.5 366V371" stroke="#c0f8c0" stroke-width="1"/><path d="M1149.5 374V379" stroke="#c0f8c0" stroke-width="1"/><path d="M1331.5 366V371" stroke="#c0f8c0" stroke-width="1"/><path d="M1331.5 374V379" stroke="#c0f8c0" stroke-width="1"/><path d="M788 372.5H815" stroke="#000" stroke-width="1"/><path d="M969 372.5H996" stroke="#000" stroke-width="1"/><path d="M1151 372.5H1178" stroke="#000" stroke-width="1"/><path d="M1333 372.5H1348" stroke="#000" stroke-width="1"/><rect x="350" y="367" width="48" height="11" fill="#000"/><text x="349.5" y="377" fill="#fff" font-size="11" letter-spacing="-0.22" font-family="Liberation Sans">00000000</text><rect x="816" y="367" width="48" height="11" fill="#000"/><text x="815.5" y="377" fill="#fff" font-size="11" letter-spacing="-0.22" font-family="Liberation Sans">00000000</text><rect x="997" y="367" width="48" height="11" fill="#000"/><text x="996.5" y="377" fill="#fff" font-size="11" letter-spacing="-0.22" font-family="Liberation Sans">00000000</text><rect x="1179" y="367" width="48" height="11" fill="#000"/><text x="1178.5" y="377" fill="#fff" font-size="11" letter-spacing="-0.22" font-family="Liberation Sans">00000000</text><path d="M350 395.5H1347" stroke="#00ff00" stroke-width="1"/><rect x="787" y="384" width="1" height="12" fill="#00ff00"/><rect x="968" y="384" width="1" height="12" fill="#00ff00"/><rect x="1150" y="384" width="1" height="12" fill="#00ff00"/><rect x="1332" y="384" width="1" height="12" fill="#00ff00"/><path d="M350 412.5H1347" stroke="#00ff00" stroke-width="1"/><rect x="814" y="401" width="1" height="12" fill="#00ff00"/><rect x="996" y="401" width="1" height="12" fill="#00ff00"/><rect x="1178" y="401" width="1" height="12" fill="#00ff00"/><path d="M350 429.5H787.5V417.5H814.5V429.5H968.5V417.5H996.5V429.5H1150.5V417.5H1178.5V429.5H1332.5V417.5H1347" stroke="#00ff00" stroke-width="1" fill="none" shape-rendering="crispEdges"/><path d="M350 446.5H1347" stroke="#00ff00" stroke-width="1" fill="none" shape-rendering="crispEdges"/><path d="M350 463.5H1347" stroke="#00ff00" stroke-width="1" fill="none" shape-rendering="crispEdges"/><path d="M349.5 137V607M349.5 610V632" stroke="#ffd800" stroke-width="1"/></svg>
<div class="ab" style="left:9px;top:608px;width:1340px;height:2px;background:#fff"></div>
<div class="ab" style="left:9px;top:610px;width:45px;height:22px;background:#808080"></div>
<div class="ab" style="left:54px;top:610px;width:238px;height:22px;background:#fff"></div>
<div class="ab" style="left:294px;top:610px;width:53px;height:22px;background:#fff"></div>
<div class="ab" style="left:349px;top:610px;width:1000px;height:22px;background:#000"></div>
<div class="ab" style="left:9px;top:632px;width:283px;height:18px;background:#808080"></div>
<div class="ab" style="left:294px;top:632px;width:53px;height:18px;background:#808080"></div>
<div class="ab" style="left:349px;top:632px;width:1000px;height:1px;background:#808080"></div>
<div class="ab" style="left:349px;top:633px;width:1000px;height:17px;background:#000"></div>
<div class="ab" style="left:1351px;top:158px;width:18px;height:493px;background:#f0f0f0"></div>
<div class="ab" style="left:1351px;top:610px;width:18px;height:41px;background:#808080"></div>
<div class="t" style="left:260px;top:616px;color:#000">Now</div>
<div class="t" style="left:294px;top:616px;color:#000;letter-spacing:-0.3px">20060 ns</div>
<div class="t" style="left:240px;top:636px;color:#fff">Cursor 1</div>
<div class="t" style="left:316px;top:636px;color:#fff">0 ns</div>
<svg style="left:349px;top:0;overflow:hidden" width="1000" height="700" viewBox="349 0 1000 700"><path d="M349.5 610V618" stroke="#00e000"/><path d="M357.5 614V618" stroke="#00e000"/><path d="M364.5 614V618" stroke="#00e000"/><path d="M372.5 614V618" stroke="#00e000"/><path d="M380.5 614V618" stroke="#00e000"/><path d="M388.5 614V618" stroke="#00e000"/><path d="M395.5 614V618" stroke="#00e000"/><path d="M403.5 614V618" stroke="#00e000"/><path d="M411.5 614V618" stroke="#00e000"/><path d="M418.5 614V618" stroke="#00e000"/><path d="M426.5 610V618" stroke="#00e000"/><path d="M434.5 614V618" stroke="#00e000"/><path d="M441.5 614V618" stroke="#00e000"/><path d="M449.5 614V618" stroke="#00e000"/><path d="M457.5 614V618" stroke="#00e000"/><path d="M464.5 614V618" stroke="#00e000"/><path d="M472.5 614V618" stroke="#00e000"/><path d="M480.5 614V618" stroke="#00e000"/><path d="M488.5 614V618" stroke="#00e000"/><path d="M495.5 614V618" stroke="#00e000"/><path d="M503.5 610V618" stroke="#00e000"/><path d="M511.5 614V618" stroke="#00e000"/><path d="M518.5 614V618" stroke="#00e000"/><path d="M526.5 614V618" stroke="#00e000"/><path d="M534.5 614V618" stroke="#00e000"/><path d="M542.5 614V618" stroke="#00e000"/><path d="M549.5 614V618" stroke="#00e000"/><path d="M557.5 614V618" stroke="#00e000"/><path d="M565.5 614V618" stroke="#00e000"/><path d="M572.5 614V618" stroke="#00e000"/><path d="M580.5 610V618" stroke="#00e000"/><path d="M588.5 614V618" stroke="#00e000"/><path d="M595.5 614V618" stroke="#00e000"/><path d="M603.5 614V618" stroke="#00e000"/><path d="M611.5 614V618" stroke="#00e000"/><path d="M618.5 614V618" stroke="#00e000"/><path d="M626.5 614V618" stroke="#00e000"/><path d="M634.5 614V618" stroke="#00e000"/><path d="M642.5 614V618" stroke="#00e000"/><path d="M649.5 614V618" stroke="#00e000"/><path d="M657.5 610V618" stroke="#00e000"/><path d="M665.5 614V618" stroke="#00e000"/><path d="M672.5 614V618" stroke="#00e000"/><path d="M680.5 614V618" stroke="#00e000"/><path d="M688.5 614V618" stroke="#00e000"/><path d="M696.5 614V618" stroke="#00e000"/><path d="M703.5 614V618" stroke="#00e000"/><path d="M711.5 614V618" stroke="#00e000"/><path d="M719.5 614V618" stroke="#00e000"/><path d="M726.5 614V618" stroke="#00e000"/><path d="M734.5 610V618" stroke="#00e000"/><path d="M742.5 614V618" stroke="#00e000"/><path d="M749.5 614V618" stroke="#00e000"/><path d="M757.5 614V618" stroke="#00e000"/><path d="M765.5 614V618" stroke="#00e000"/><path d="M772.5 614V618" stroke="#00e000"/><path d="M780.5 614V618" stroke="#00e000"/><path d="M788.5 614V618" stroke="#00e000"/><path d="M796.5 614V618" stroke="#00e000"/><path d="M803.5 614V618" stroke="#00e000"/><path d="M811.5 610V618" stroke="#00e000"/><path d="M819.5 614V618" stroke="#00e000"/><path d="M826.5 614V618" stroke="#00e000"/><path d="M834.5 614V618" stroke="#00e000"/><path d="M842.5 614V618" stroke="#00e000"/><path d="M850.5 614V618" stroke="#00e000"/><path d="M857.5 614V618" stroke="#00e000"/><path d="M865.5 614V618" stroke="#00e000"/><path d="M873.5 614V618" stroke="#00e000"/><path d="M880.5 614V618" stroke="#00e000"/><path d="M888.5 610V618" stroke="#00e000"/><path d="M896.5 614V618" stroke="#00e000"/><path d="M903.5 614V618" stroke="#00e000"/><path d="M911.5 614V618" stroke="#00e000"/><path d="M919.5 614V618" stroke="#00e000"/><path d="M926.5 614V618" stroke="#00e000"/><path d="M934.5 614V618" stroke="#00e000"/><path d="M942.5 614V618" stroke="#00e000"/><path d="M950.5 614V618" stroke="#00e000"/><path d="M957.5 614V618" stroke="#00e000"/><path d="M965.5 610V618" stroke="#00e000"/><path d="M973.5 614V618" stroke="#00e000"/><path d="M980.5 614V618" stroke="#00e000"/><path d="M988.5 614V618" stroke="#00e000"/><path d="M996.5 614V618" stroke="#00e000"/><path d="M1004.5 614V618" stroke="#00e000"/><path d="M1011.5 614V618" stroke="#00e000"/><path d="M1019.5 614V618" stroke="#00e000"/><path d="M1027.5 614V618" stroke="#00e000"/><path d="M1034.5 614V618" stroke="#00e000"/><path d="M1042.5 610V618" stroke="#00e000"/><path d="M1050.5 614V618" stroke="#00e000"/><path d="M1057.5 614V618" stroke="#00e000"/><path d="M1065.5 614V618" stroke="#00e000"/><path d="M1073.5 614V618" stroke="#00e000"/><path d="M1080.5 614V618" stroke="#00e000"/><path d="M1088.5 614V618" stroke="#00e000"/><path d="M1096.5 614V618" stroke="#00e000"/><path d="M1104.5 614V618" stroke="#00e000"/><path d="M1111.5 614V618" stroke="#00e000"/><path d="M1119.5 610V618" stroke="#00e000"/><path d="M1127.5 614V618" stroke="#00e000"/><path d="M1134.5 614V618" stroke="#00e000"/><path d="M1142.5 614V618" stroke="#00e000"/><path d="M1150.5 614V618" stroke="#00e000"/><path d="M1158.5 614V618" stroke="#00e000"/><path d="M1165.5 614V618" stroke="#00e000"/><path d="M1173.5 614V618" stroke="#00e000"/><path d="M1181.5 614V618" stroke="#00e000"/><path d="M1188.5 614V618" stroke="#00e000"/><path d="M1196.5 610V618" stroke="#00e000"/><path d="M1204.5 614V618" stroke="#00e000"/><path d="M1211.5 614V618" stroke="#00e000"/><path d="M1219.5 614V618" stroke="#00e000"/><path d="M1227.5 614V618" stroke="#00e000"/><path d="M1234.5 614V618" stroke="#00e000"/><path d="M1242.5 614V618" stroke="#00e000"/><path d="M1250.5 614V618" stroke="#00e000"/><path d="M1258.5 614V618" stroke="#00e000"/><path d="M1265.5 614V618" stroke="#00e000"/><path d="M1273.5 610V618" stroke="#00e000"/><path d="M1281.5 614V618" stroke="#00e000"/><path d="M1288.5 614V618" stroke="#00e000"/><path d="M1296.5 614V618" stroke="#00e000"/><path d="M1304.5 614V618" stroke="#00e000"/><path d="M1312.5 614V618" stroke="#00e000"/><path d="M1319.5 614V618" stroke="#00e000"/><path d="M1327.5 614V618" stroke="#00e000"/><path d="M1335.5 614V618" stroke="#00e000"/><path d="M1342.5 614V618" stroke="#00e000"/><text x="349" y="630" fill="#00e000" font-size="11" font-family="Liberation Sans" text-anchor="middle">0 ns</text><text x="503" y="630" fill="#00e000" font-size="11" font-family="Liberation Sans" text-anchor="middle">2000 ns</text><text x="657" y="630" fill="#00e000" font-size="11" font-family="Liberation Sans" text-anchor="middle">4000 ns</text><text x="811" y="630" fill="#00e000" font-size="11" font-family="Liberation Sans" text-anchor="middle">6000 ns</text><text x="965" y="630" fill="#00e000" font-size="11" font-family="Liberation Sans" text-anchor="middle">8000 ns</text><text x="1119" y="630" fill="#00e000" font-size="11" font-family="Liberation Sans" text-anchor="middle">10000 ns</text><text x="1273" y="630" fill="#00e000" font-size="11" font-family="Liberation Sans" text-anchor="middle">12000 ns</text><path d="M349.5 610V632" stroke="#ffd800"/><rect x="350.5" y="633.5" width="24" height="15" fill="none" stroke="#f0c000"/><text x="352" y="646" fill="#f0c000" font-size="11" font-family="Liberation Sans">0 ns</text></svg>
<svg style="left:18px;top:615px;" width="12" height="13" viewBox="0 0 12 13"><path d="M1 11h10" stroke="#3070d0" stroke-width="1.5"/><path d="M1 9l3-6l3 6M7 3l3 6" stroke="#404040" fill="none" stroke-width="1.6"/></svg>
<svg style="left:30px;top:614px;" width="12" height="14" viewBox="0 0 12 14"><rect x=".5" y="1.5" width="11" height="11" fill="#dce8f8" stroke="#5080c0"/><rect x="1" y="2" width="10" height="2" fill="#4a7ac8"/><path d="M3 6h6M3 8h4" stroke="#6a8aba"/></svg>
<svg style="left:42px;top:615px;" width="12" height="12" viewBox="0 0 12 12"><circle cx="6" cy="6" r="5.2" fill="#48a848"/><circle cx="6" cy="6" r="4" fill="#70c070"/><path d="M6 3.5v5M3.5 6h5" stroke="#fff" stroke-width="1.8"/></svg>
<svg style="left:21px;top:635px;" width="12" height="13" viewBox="0 0 12 13"><path d="M3 6V4a3 3 0 0 1 6 0" stroke="#909090" fill="none" stroke-width="1.3"/><rect x="1" y="6" width="10" height="7" fill="#e8b830" stroke="#b88a10"/></svg>
<svg style="left:34px;top:634px;" width="12" height="13" viewBox="0 0 12 13"><path d="M2 11L8 4" stroke="#5a8ad8" stroke-width="3"/><path d="M8 4l1-3 2 2-3 1" stroke="#8090a0" fill="none" stroke-width="1.3"/></svg>
<svg style="left:46px;top:635px;" width="12" height="12" viewBox="0 0 12 12"><circle cx="6" cy="6" r="5.5" fill="#e04848"/><path d="M3 6h6" stroke="#fff" stroke-width="2"/></svg>
<div class="ab" style="left:9px;top:652px;width:283px;height:19px;background:#808080"></div>
<div class="ab" style="left:35px;top:653px;width:256px;height:17px;background:repeating-conic-gradient(#f4f4f4 0 25%,#e4e4e4 0 50%) 0 0/2px 2px"></div>
<div class="ab" style="left:18px;top:653px;width:17px;height:17px;background:#f0f0f0;border-top:1px solid #fff;border-left:1px solid #fff;border-right:1px solid #808080;border-bottom:1px solid #808080;box-shadow:inset -1px -1px 0 #c0c0c0"></div>
<svg style="left:23.5px;top:657.5px;" width="5" height="8" viewBox="0 0 5 8"><path d="M4 0v8L0 4z" fill="#a0a0a0"/></svg>
<div class="ab" style="left:274px;top:653px;width:17px;height:17px;background:#f0f0f0;border-top:1px solid #fff;border-left:1px solid #fff;border-right:1px solid #808080;border-bottom:1px solid #808080;box-shadow:inset -1px -1px 0 #c0c0c0"></div>
<svg style="left:280.5px;top:657.5px;" width="5" height="8" viewBox="0 0 5 8"><path d="M0 0v8L4 4z" fill="#a0a0a0"/></svg>
<div class="ab" style="left:294px;top:652px;width:53px;height:19px;background:#808080"></div>
<div class="ab" style="left:294px;top:653px;width:17px;height:17px;background:#f0f0f0;border-top:1px solid #fff;border-left:1px solid #fff;border-right:1px solid #808080;border-bottom:1px solid #808080;box-shadow:inset -1px -1px 0 #c0c0c0"></div>
<svg style="left:299.5px;top:657.5px;" width="5" height="8" viewBox="0 0 5 8"><path d="M4 0v8L0 4z" fill="#000"/></svg>
<div class="ab" style="left:312px;top:653px;width:16px;height:17px;background:#f0f0f0;border-top:1px solid #fff;border-left:1px solid #fff;border-right:1px solid #808080;border-bottom:1px solid #808080;box-shadow:inset -1px -1px 0 #c0c0c0"></div>
<div class="ab" style="left:329px;top:653px;width:17px;height:17px;background:#f0f0f0;border-top:1px solid #fff;border-left:1px solid #fff;border-right:1px solid #808080;border-bottom:1px solid #808080;box-shadow:inset -1px -1px 0 #c0c0c0"></div>
<svg style="left:335.5px;top:657.5px;" width="5" height="8" viewBox="0 0 5 8"><path d="M0 0v8L4 4z" fill="#000"/></svg>
<div class="ab" style="left:349px;top:652px;width:1000px;height:19px;background:#c8c8c8"></div>
<div class="ab" style="left:349px;top:653px;width:17px;height:17px;background:#f0f0f0;border-top:1px solid #fff;border-left:1px solid #fff;border-right:1px solid #808080;border-bottom:1px solid #808080;box-shadow:inset -1px -1px 0 #c0c0c0"></div>
<svg style="left:354.5px;top:657.5px;" width="5" height="8" viewBox="0 0 5 8"><path d="M4 0v8L0 4z" fill="#000"/></svg>
<div class="ab" style="left:367px;top:653px;width:603px;height:17px;background:#f0f0f0;border-top:1px solid #fff;border-left:1px solid #fff;border-right:1px solid #808080;border-bottom:1px solid #808080;box-shadow:inset -1px -1px 0 #c0c0c0"></div>
<div class="ab" style="left:1331px;top:653px;width:17px;height:17px;background:#f0f0f0;border-top:1px solid #fff;border-left:1px solid #fff;border-right:1px solid #808080;border-bottom:1px solid #808080;box-shadow:inset -1px -1px 0 #c0c0c0"></div>
<svg style="left:1337.5px;top:657.5px;" width="5" height="8" viewBox="0 0 5 8"><path d="M0 0v8L4 4z" fill="#000"/></svg>
<div class="ab" style="left:1351px;top:158px;width:16px;height:449px;background:#f0f0f0;border-left:1px solid #a0a0a0;border-right:1px solid #a0a0a0"></div>
<div class="ab" style="left:1353px;top:399px;width:12px;height:16px;background:#fff"></div>
<div class="ab" style="left:1351px;top:159px;width:16px;height:15px;background:#f0f0f0;border-top:1px solid #fff;border-left:1px solid #fff;border-right:1px solid #808080;border-bottom:1px solid #808080;box-shadow:inset -1px -1px 0 #c0c0c0"></div>
<svg style="left:1355.0px;top:164.5px;" width="9" height="5" viewBox="0 0 9 5"><path d="M0 4.5h9L4.5 0z" fill="#000"/></svg>
<div class="ab" style="left:1351px;top:590px;width:16px;height:15px;background:#f0f0f0;border-top:1px solid #fff;border-left:1px solid #fff;border-right:1px solid #808080;border-bottom:1px solid #808080;box-shadow:inset -1px -1px 0 #c0c0c0"></div>
<svg style="left:1355.0px;top:595.5px;" width="9" height="5" viewBox="0 0 9 5"><path d="M0 0h9L4.5 4.5z" fill="#000"/></svg>
<div class="ab" style="left:1351px;top:607px;width:18px;height:3px;background:#fff"></div>
<div class="ab" style="left:1351px;top:610px;width:17px;height:40px;background:#808080"></div>
<div class="ab" style="left:1351px;top:650px;width:17px;height:2px;background:#fff"></div>
<div class="ab" style="left:1351px;top:652px;width:17px;height:19px;background:#808080"></div>
<div class="ab" style="left:1367px;top:137px;width:3px;height:534px;background:#f8f8f8"></div>
<div class="ab" style="left:1370px;top:135px;width:1px;height:537px;background:#a8a8a8"></div>
<div class="ab" style="left:6px;top:672px;width:1367px;height:23px;background:#f0f0f0"></div>
<div class="ab" style="left:7px;top:674px;width:169px;height:19px;border-top:1px solid #a0a0a0;border-left:1px solid #a0a0a0;border-bottom:1px solid #fff;border-right:1px solid #fff"></div>
<div class="ab" style="left:177px;top:674px;width:1177px;height:19px;border-top:1px solid #a0a0a0;border-left:1px solid #a0a0a0;border-bottom:1px solid #fff;border-right:1px solid #fff"></div>
<div class="t" style="left:14px;top:679px;color:#000;letter-spacing:-0.15px">0 ns to 12974 ns</div>
<div class="t" style="left:184px;top:679px;color:#000;letter-spacing:-0.12px">/rs_subsystem_tb/u_RS_Subsystem/endIn</div>
<svg style="left:1356px;top:680px;" width="13" height="13" viewBox="0 0 13 13"><path d="M12 1L1 12M12 5L5 12M12 9L9 12" stroke="#a0a0a0" stroke-width="1"/><path d="M12 2L2 12M12 6L6 12M12 10L10 12" stroke="#fff" stroke-width="1"/></svg>
<div class="ab" style="left:472px;top:75px;width:21px;height:20px;border-top:1px solid #fff;border-left:1px solid #fff;border-right:1px solid #808080;border-bottom:1px solid #808080"></div>
<div class="ab" style="left:630px;top:75px;width:60px;height:19px;background:#fff;border-top:2px solid #000;border-left:2px solid #000;border-right:1px solid #e0e0e0;border-bottom:1px solid #e0e0e0"></div>
<div class="t" style="left:646px;top:80px;font-family:'Liberation Mono',monospace;font-size:11.2px;color:#202050">100 ns</div>
<div class="ab" style="left:690px;top:75px;width:14px;height:19px;background:#f0f0f0;border-right:1px solid #808080;border-bottom:1px solid #808080"></div>
<div class="ab" style="left:833px;top:75px;width:20px;height:20px;background:#f4f4f4;border-top:1px solid #fff;border-left:1px solid #fff;border-right:1px solid #707070;border-bottom:1px solid #707070"></div>
<div class="ab" style="left:858px;top:75px;width:20px;height:20px;background:#f4f4f4;border-top:1px solid #fff;border-left:1px solid #fff;border-right:1px solid #707070;border-bottom:1px solid #707070"></div>
<div class="ab" style="left:23px;top:107px;width:20px;height:20px;background:#fff;border-top:1px solid #000;border-left:1px solid #000;border-right:1px solid #e8e8e8;border-bottom:1px solid #e8e8e8;box-shadow:inset 1px 1px 0 #404040"></div>
<div class="ab" style="left:49px;top:107px;width:21px;height:20px;background:#f0f0f0;border-top:1px solid #fff;border-left:1px solid #fff;border-right:2px solid #909090;border-bottom:2px solid #909090"></div>
<div class="ab" style="left:75px;top:107px;width:21px;height:20px;background:#f0f0f0;border-top:1px solid #fff;border-left:1px solid #fff;border-right:2px solid #909090;border-bottom:2px solid #909090"></div>
<div class="ab" style="left:101px;top:107px;width:21px;height:20px;background:#f0f0f0;border-top:1px solid #fff;border-left:1px solid #fff;border-right:2px solid #909090;border-bottom:2px solid #909090"></div>
<div class="t" style="left:469px;top:110px;font-size:11px;color:#000">Search:</div>
<div class="ab" style="left:512px;top:105px;width:116px;height:19px;background:#fff;border-top:2px solid #000;border-left:2px solid #000;border-right:1px solid #f0f0f0;border-bottom:1px solid #f0f0f0"></div>
<div class="ab" style="left:630px;top:107px;width:17px;height:18px;background:#f0f0f0;border-top:1px solid #fff;border-left:1px solid #fff;border-right:2px solid #909090;border-bottom:2px solid #909090"></div>
<div class="ab" style="left:860px;top:107px;width:21px;height:20px;background:#fff;border-top:2px solid #000;border-left:2px solid #000;border-right:1px solid #e0e0e0;border-bottom:1px solid #e0e0e0"></div>
<div class="ab" style="left:886px;top:107px;width:21px;height:20px;background:#f0f0f0;border-top:1px solid #fff;border-left:1px solid #fff;border-right:2px solid #909090;border-bottom:2px solid #909090"></div>
<div class="ab" style="left:913px;top:107px;width:20px;height:20px;background:#f0f0f0;border-top:1px solid #fff;border-left:1px solid #fff;border-right:2px solid #909090;border-bottom:2px solid #909090"></div>
<svg style="left:0;top:0" width="1379" height="700" viewBox="0 0 1379 700"><path d="M23.5 75.5H33.5L36.5 78.5V90.5H23.5Z" fill="#fff" stroke="#8a8a8a"/><path d="M36.5 78V90.5H24" stroke="#000" fill="none"/><rect x="25" y="78" width="2" height="1" fill="#000"/><rect x="28" y="78" width="2" height="1" fill="#000"/><rect x="31" y="78" width="2" height="1" fill="#000"/><rect x="25" y="80" width="5" height="1" fill="#000"/><rect x="25" y="82" width="3" height="1" fill="#000"/><rect x="29" y="82" width="3" height="1" fill="#000"/><rect x="25" y="84" width="5" height="1" fill="#000"/><rect x="31" y="84" width="2" height="1" fill="#000"/><rect x="25" y="86" width="4" height="1" fill="#000"/><rect x="30" y="86" width="3" height="1" fill="#000"/><path d="M43 83h6l-3 3z" fill="#000"/><path d="M54.5 80.5h4l1 1h5v2h-10z" fill="#ffff30" stroke="#000"/><path d="M54.5 83.5v6.5h10l4.5-6h-10l-4.5 6" fill="#ffff60" stroke="#000"/><path d="M55 89.5l4.5-6h10l-4.5 6z" fill="#808000" stroke="#000"/><path d="M61 79c2-3 5-3 7 0" stroke="#000" fill="none"/><path d="M66 78h3v-3" stroke="#000" fill="none"/><rect x="77.5" y="76.5" width="13" height="13" fill="#808000" stroke="#000" stroke-width="1.2"/><rect x="80" y="77" width="8" height="5" fill="#fff" stroke="#000" stroke-width=".8"/><rect x="80" y="85" width="9" height="5" fill="#000"/><rect x="86" y="86" width="2" height="3" fill="#fff"/><defs><pattern id="chk" width="2" height="2" patternUnits="userSpaceOnUse"><rect x="0" y="0" width="1" height="1" fill="#40a040"/><rect x="1" y="1" width="1" height="1" fill="#80c080"/></pattern></defs><path d="M98 84l4-5h6v-3l4 4-4 4v-2h-5l-3 3z" fill="url(#chk)"/><path d="M114 83l-4 5h-6v3l-4-4 4-4v2h5l3-3z" fill="url(#chk)"/><path d="M124.5 75.5h9l-1 4h-9z" fill="#fff" stroke="#000"/><path d="M125 77.5h6M125 79h6" stroke="#000"/><rect x="120.5" y="80.5" width="15" height="8" rx="2" fill="#fff" stroke="#000" stroke-width="1.2"/><path d="M121 83.5h14M121 86.5h14" stroke="#000"/><rect x="127" y="84" width="3" height="2" fill="#e8e800"/><path d="M159 76l3 6 3-6" stroke="#000" fill="none" stroke-width="1.2"/><circle cx="159.5" cy="87.5" r="2.2" fill="none" stroke="#0000ff" stroke-width="1.2"/><circle cx="164.5" cy="87.5" r="2.2" fill="none" stroke="#0000ff" stroke-width="1.2"/><path d="M162 82v3" stroke="#0000ff"/><path d="M176.5 75.5h6l2 2v8.5h-8z" fill="#fff" stroke="#000" stroke-width="1.1"/><path d="M178 77.5h3M178 79.5h4M178 81.5h4" stroke="#000"/><path d="M182.5 78.5h5l3 3v7.5h-8z" fill="#fff" stroke="#000090" stroke-width="1.3"/><path d="M184 82.5h3M184 84.5h5M184 86.5h5" stroke="#000"/><rect x="197.5" y="76.5" width="12" height="12" rx="1.5" fill="#808050" stroke="#000" stroke-width="1.1"/><path d="M201.5 77.5h5l-1.5-2.5h-2z" fill="#ffff00" stroke="#000" stroke-width=".8"/><path d="M202.5 82.5h8l2.5 2.5v4.5h-10.5z" fill="#fff" stroke="#000090" stroke-width="1.3"/><path d="M204 85.5h3M204 87.5h6" stroke="#000"/><path d="M225 78.5c2-3 7-3 9 0.5v3l-3 4" fill="none" stroke="#000" stroke-width="1.1" stroke-dasharray="1 1.5"/><path d="M221 78l2 2-2 2M223 78l-2 2 2 2" fill="none" stroke="#000" stroke-width=".9"/><path d="M220 89.5h16" stroke="#000" stroke-dasharray="1 1"/><path d="M243 81.5v-2c2-3 6-4 9-1.5" fill="none" stroke="#000" stroke-width="1.1" stroke-dasharray="1 1.5"/><path d="M253 78l2 2-2 2M255 78l-2 2 2 2" fill="none" stroke="#000" stroke-width=".9"/><path d="M241 89.5h16" stroke="#000" stroke-dasharray="1 1"/><circle cx="282" cy="83" r="7" fill="#58b058"/><circle cx="282" cy="83" r="5.5" fill="#78c878" stroke="#a8e0a8" stroke-width=".8"/><path d="M282 79.5v7M278.5 83h7" stroke="#fff" stroke-width="2.2"/><path d="M296 83h6l-3 3z" fill="#000"/><path d="M307 76h3v3h1v4h1v-3h3v-4h3v3h1v4l2 3v4h-6v-3h-3v3h-6v-4l2-3v-4z" fill="#000"/><rect x="308" y="81" width="1" height="2" fill="#fff"/><rect x="314" y="81" width="1" height="2" fill="#fff"/><rect x="327.5" y="75.5" width="6" height="6" fill="#fff" stroke="#000" stroke-width="1.2"/><rect x="327.5" y="84.5" width="6" height="6" fill="#fff" stroke="#000" stroke-width="1.2"/><path d="M329 78.5h3M330.5 77v3M329 87.5h3M330.5 86v3M334 78.5h7M334 87.5h7" stroke="#000"/><path d="M368.5 88.5l7-4 7.5 4-7.5 4z" fill="#fff" stroke="#000" stroke-width="1.1"/><path d="M368.5 85.5l7-4 7.5 4-7.5 4z" fill="#fff" stroke="#000" stroke-width="1.1"/><path d="M368.5 82.5l7-4 7.5 4-7.5 4z" fill="#fff" stroke="#000" stroke-width="1.1"/><path d="M375.5 75v5" stroke="#000090" stroke-width="2.2"/><path d="M371.5 79h8l-4 4z" fill="#000090"/><rect x="389" y="83" width="1" height="1" fill="#000"/><rect x="391" y="83" width="1" height="1" fill="#000"/><rect x="393" y="83" width="1" height="1" fill="#000"/><rect x="395" y="83" width="1" height="1" fill="#000"/><rect x="397" y="83" width="1" height="1" fill="#000"/><rect x="399" y="83" width="1" height="1" fill="#000"/><rect x="401" y="83" width="1" height="1" fill="#000"/><rect x="403" y="83" width="1" height="1" fill="#000"/><rect x="389" y="85" width="1" height="1" fill="#000"/><rect x="391" y="85" width="1" height="1" fill="#000"/><rect x="393" y="85" width="1" height="1" fill="#000"/><rect x="395" y="85" width="1" height="1" fill="#000"/><rect x="397" y="85" width="1" height="1" fill="#000"/><rect x="399" y="85" width="1" height="1" fill="#000"/><rect x="401" y="85" width="1" height="1" fill="#000"/><rect x="403" y="85" width="1" height="1" fill="#000"/><rect x="389" y="87" width="1" height="1" fill="#000"/><rect x="391" y="87" width="1" height="1" fill="#000"/><rect x="393" y="87" width="1" height="1" fill="#000"/><rect x="395" y="87" width="1" height="1" fill="#000"/><rect x="397" y="87" width="1" height="1" fill="#000"/><rect x="399" y="87" width="1" height="1" fill="#000"/><rect x="401" y="87" width="1" height="1" fill="#000"/><rect x="403" y="87" width="1" height="1" fill="#000"/><rect x="389" y="89" width="1" height="1" fill="#000"/><rect x="391" y="89" width="1" height="1" fill="#000"/><rect x="393" y="89" width="1" height="1" fill="#000"/><rect x="395" y="89" width="1" height="1" fill="#000"/><rect x="397" y="89" width="1" height="1" fill="#000"/><rect x="399" y="89" width="1" height="1" fill="#000"/><rect x="401" y="89" width="1" height="1" fill="#000"/><rect x="403" y="89" width="1" height="1" fill="#000"/><rect x="391" y="75" width="1" height="1" fill="#0000a0"/><rect x="391" y="77" width="1" height="1" fill="#0000a0"/><rect x="397" y="75" width="1" height="1" fill="#0000a0"/><rect x="397" y="77" width="1" height="1" fill="#0000a0"/><rect x="403" y="75" width="1" height="1" fill="#0000a0"/><rect x="403" y="77" width="1" height="1" fill="#0000a0"/><path d="M390 79l2.5 2.5 2.5-2.5M396 79l2.5 2.5 2.5-2.5" stroke="#0000a0" fill="none" stroke-dasharray="1 1"/><path d="M413.5 76.5h9l2 2v3l-1 2 1 2v3h-11z" fill="#fff" stroke="#000" stroke-width="1.2"/><path d="M410 78.5h3M410 80.5h3M410 82.5h3M410 84.5h3" stroke="#9090c0"/><path d="M416 79.5h5M416 81.5h5M416 83.5h5M416 85.5h5" stroke="#3030a0"/><path d="M413 88.5l2.5-2.5 2.5 2.5-2.5 2.5z" fill="#e00020" stroke="#000"/><path d="M422 88.5l2.5-2.5 2.5 2.5-2.5 2.5z" fill="#e00020" stroke="#000"/><rect x="433.5" y="75.5" width="11" height="14" fill="#fff" stroke="#7a7a7a"/><path d="M436 78.5h5M436 80.5h5M436 82.5h3M436 84.5h6M436 86.5h6" stroke="#000"/><path d="M439 76l9 9M448 76l-9 9" stroke="#800000" stroke-width="2"/><path d="M447.5 82v7M444.5 86.5l3 3 3-3M444 89.5h7" stroke="#000090" fill="none"/><rect x="476.5" y="78.5" width="7" height="7" rx="2" fill="none" stroke="#004000" stroke-width="1.8"/><rect x="481.5" y="83.5" width="7" height="7" rx="2" fill="none" stroke="#004000" stroke-width="1.8"/><path d="M480 82l5 5" stroke="#40a040"/><path d="M500 82v-4h2" stroke="#0000ff" fill="none" stroke-width="1.2"/><path d="M501 77l2 1-2 1" fill="#0000ff"/><path d="M502 84h-2v6h2" stroke="#a00000" fill="none" stroke-width="1.5"/><rect x="503.5" y="77.5" width="11" height="14" fill="#fff" stroke="#7a7a7a"/><path d="M506 80.5h5" stroke="#000"/><path d="M506 82.5h5" stroke="#000"/><path d="M506 84.5h3" stroke="#000"/><path d="M506 86.5h6" stroke="#000"/><path d="M506 88.5h6" stroke="#000"/><path d="M518 85h5l-2.5 3z" fill="#000"/><path d="M538 77l-6.5 6.5h4v8h5v-8h4z" fill="#181818"/><path d="M538 78.5l-4.5 4.5h2.5v8" stroke="#707070" fill="none"/><path d="M552 84l6.5-6.5v4h10v5h-10v4z" fill="#181818"/><path d="M553.5 84l5-5v3h9" stroke="#707070" fill="none"/><path d="M590 84l-6.5-6.5v4h-10v5h10v4z" fill="#b0b0b0" stroke="#707070" stroke-width="1" stroke-dasharray="1 1"/><rect x="607.5" y="77.5" width="11" height="14" fill="#fff" stroke="#7a7a7a"/><path d="M610 80.5h5" stroke="#000"/><path d="M610 82.5h5" stroke="#000"/><path d="M610 84.5h3" stroke="#000"/><path d="M610 86.5h6" stroke="#000"/><path d="M610 88.5h6" stroke="#000"/><path d="M621.5 76V91M618 80l3.5-4 3.5 4M618 78h7" stroke="#000090" fill="none" stroke-width="1.2"/><path d="M693 82h7l-3.5-5z" fill="#000"/><path d="M693 86h7l-3.5 5z" fill="#000"/><path d="M691 84.5h12" stroke="#808080"/><rect x="712.5" y="77.5" width="11" height="14" fill="#fff" stroke="#7a7a7a"/><path d="M715 80.5h5" stroke="#000"/><path d="M715 82.5h5" stroke="#000"/><path d="M715 84.5h3" stroke="#000"/><path d="M715 86.5h6" stroke="#000"/><path d="M715 88.5h6" stroke="#000"/><rect x="734.5" y="77.5" width="11" height="14" fill="#fff" stroke="#7a7a7a"/><path d="M737 80.5h5" stroke="#000"/><path d="M737 82.5h5" stroke="#000"/><path d="M737 84.5h3" stroke="#000"/><path d="M737 86.5h6" stroke="#000"/><path d="M737 88.5h6" stroke="#000"/><rect x="756.5" y="77.5" width="11" height="14" fill="#fff" stroke="#7a7a7a"/><path d="M759 80.5h5" stroke="#000"/><path d="M759 82.5h5" stroke="#000"/><path d="M759 84.5h3" stroke="#000"/><path d="M759 86.5h6" stroke="#000"/><path d="M759 88.5h6" stroke="#000"/><rect x="778.5" y="77.5" width="11" height="14" fill="#fff" stroke="#7a7a7a"/><path d="M781 80.5h5" stroke="#000"/><path d="M781 82.5h5" stroke="#000"/><path d="M781 84.5h3" stroke="#000"/><path d="M781 86.5h6" stroke="#000"/><path d="M781 88.5h6" stroke="#000"/><path d="M725.5 77V90M722 87l3.5 3.5 3.5-3.5M722 90.5h7" stroke="#000090" fill="none" stroke-width="1.2"/><path d="M747.5 81V90M744 87l3.5 3.5 3.5-3.5" stroke="#000090" fill="none" stroke-width="1.2"/><path d="M747.5 76l2 2-2 2-2-2z" fill="#fff" stroke="#e00000"/><path d="M769.5 77V90M766 85l3.5 3.5 3.5-3.5M766 88l3.5 3.5 3.5-3.5" stroke="#000090" fill="none" stroke-width="1.2"/><path d="M791.5 81V90M788 87l3.5 3.5 3.5-3.5M788 90.5h7" stroke="#000090" fill="none" stroke-width="1.2"/><path d="M783 77l10 9M793 77l-10 9" stroke="#800000" stroke-width="2"/><path d="M810 79a6 6 0 1 0 0 8" fill="none" stroke="#e04040" stroke-width="3" stroke-dasharray="1.2 .8"/><path d="M804 81h5v4h-5" stroke="#e04040" fill="none" stroke-dasharray="1 1"/><path d="M839 85h3v3h3v-9h3v3h3v10h-12z" fill="#505050"/><rect x="840" y="92" width="11" height="1" fill="#404040"/><rect x="842" y="88" width="2" height="2" fill="#00f000"/><rect x="845" y="80" width="2" height="10" fill="#ffff00"/><rect x="848" y="82" width="2" height="8" fill="#ff0000"/><rect x="840" y="90" width="10" height="1" fill="#606060"/><path d="M864 85h3v3h3v-9h3v3h3v10h-12z" fill="#505050"/><rect x="865" y="92" width="11" height="1" fill="#404040"/><rect x="867" y="88" width="2" height="2" fill="#00f000"/><rect x="870" y="80" width="2" height="10" fill="#ffff00"/><rect x="873" y="82" width="2" height="8" fill="#ff0000"/><rect x="865" y="90" width="10" height="1" fill="#606060"/><path d="M836 78h5l1 1v4l-1 1h-3v2h-2zM838 80v2h2v-2z" fill="#000" fill-rule="evenodd"/><path d="M861 79h9l1 1v5h-2v-4h-2v4h-2v-4h-2v4h-2z" fill="#000"/><path d="M888.5 86.5l-3-3 1-1.5 3 2v-6.5l1-1 1 1v4-5l1-1 1.5 1v5-4l1-1 1.5 1v5-3l1-.5 1 1v6l-2 4h-6z" fill="#fff" stroke="#000" stroke-width="1.1"/><path d="M891 90l5-3 1.5 2-4 3z" fill="#80a8e0"/><circle cx="897" cy="85" r="2" fill="#b0b0b0"/><path d="M931 76h4v5h4.5l-6.5 6-6.5-6h4.5z" fill="#0a3ee8"/><path d="M932 77v5" stroke="#6a9aff" stroke-width="1"/><circle cx="933" cy="88.5" r="2.2" fill="#0a3ee8"/><path d="M975 85h4v-4h4.5l-6.5-6-6.5 6h4.5z" fill="#0a3ee8"/><path d="M976 81v4" stroke="#6a9aff" stroke-width="1"/><circle cx="977" cy="87.5" r="2.2" fill="#0a3ee8"/><path d="M950 85c0-5 4-7 7-6.5" stroke="#0a3ee8" stroke-width="3.5" fill="none"/><path d="M956 80h8l-4.5 5.5z" fill="#0a3ee8"/><circle cx="949.5" cy="86.5" r="2" fill="#0a3ee8"/><path d="M1008 75h4v5h4.5l-6.5 6-6.5-6h4.5z" fill="#0a3ee8"/><path d="M1009 76v5" stroke="#6a9aff" stroke-width="1"/><path d="M1052 85h4v-4h4.5l-6.5-6-6.5 6h4.5z" fill="#0a3ee8"/><path d="M1053 81v4" stroke="#6a9aff" stroke-width="1"/><path d="M1026 84c0-5 4-7 7-6.5" stroke="#0a3ee8" stroke-width="3.5" fill="none"/><path d="M1032 79h8l-4.5 5.5z" fill="#0a3ee8"/><circle cx="1025.5" cy="85.5" r="2" fill="#0a3ee8"/><circle cx="1010" cy="88" r="2" fill="#0a3ee8"/><path d="M1003.5 86v4M1005.5 86v4M1014.5 86v4M1016.5 86v4" stroke="#0a3ee8"/><circle cx="1054" cy="88" r="2" fill="#0a3ee8"/><path d="M1047.5 86v4M1049.5 86v4M1058.5 86v4M1060.5 86v4" stroke="#0a3ee8"/><path d="M1027 89.5h14" stroke="#0a3ee8" stroke-width="1.5" stroke-dasharray="1 1"/><path d="M1086.5 85.5L1088 79.5C1090 77.5 1092.5 80.5 1095 77.5L1098 77L1096.5 83.5C1094 86 1091 83 1088.5 86Z" fill="#b0dcff" stroke="#2890f0" stroke-width="1.2"/><path d="M1099 76.5L1097.5 88" stroke="#b87828" stroke-width="2"/><circle cx="1098.5" cy="88" r="4" fill="#3a9030"/><path d="M1098.5 86v4M1096.5 88h4" stroke="#e0ffe0" stroke-width="1.2"/><path d="M1106 85h5l-2.5 3z" fill="#000"/><path d="M1117.5 85.5L1119 79.5C1121 77.5 1123.5 80.5 1126 77.5L1129 77L1127.5 83.5C1125 86 1122 83 1119.5 86Z" fill="#b0dcff" stroke="#2890f0" stroke-width="1.2"/><path d="M1130 76.5L1128.5 88" stroke="#b87828" stroke-width="2"/><circle cx="1129.5" cy="88" r="4" fill="#e06018"/><path d="M1127.5 88h4" stroke="#fff0e0" stroke-width="1.5"/><path d="M1137 85h5l-2.5 3z" fill="#000"/><path d="M1148.5 85.5L1150 79.5C1152 77.5 1154.5 80.5 1157 77.5L1160 77L1158.5 83.5C1156 86 1153 83 1150.5 86Z" fill="#b0dcff" stroke="#2890f0" stroke-width="1.2"/><path d="M1161 76.5L1159.5 88" stroke="#b87828" stroke-width="2"/><path d="M1153 91l8-8 2 2-8 8z" fill="#e0b040" stroke="#906010" stroke-width=".8"/><path d="M1170.5 85.5L1172 79.5C1174 77.5 1176.5 80.5 1179 77.5L1182 77L1180.5 83.5C1178 86 1175 83 1172.5 86Z" fill="#b0dcff" stroke="#2890f0" stroke-width="1.2"/><path d="M1183 76.5L1181.5 88" stroke="#b87828" stroke-width="2"/><rect x="1175" y="83" width="9" height="8" fill="#6aa0e0" stroke="#2a60b0" stroke-width=".8"/><rect x="1177" y="87" width="5" height="3" fill="#fff"/><path d="M1190 85h5l-2.5 3z" fill="#000"/><path d="M1201.5 85.5L1203 79.5C1205 77.5 1207.5 80.5 1210 77.5L1213 77L1211.5 83.5C1209 86 1206 83 1203.5 86Z" fill="#b0dcff" stroke="#2890f0" stroke-width="1.2"/><path d="M1214 76.5L1212.5 88" stroke="#b87828" stroke-width="2"/><path d="M1206 85h5v-3l5 5-5 5v-3h-5z" fill="#50b030" stroke="#207010" stroke-width=".8"/><path d="M31 112v10l2.5-2.5 2 4 1.5-1-2-4h3.5z" fill="#000"/><path d="M53.5 120v-9h7" stroke="#000" fill="none"/><rect x="57" y="114" width="7" height="6" fill="none" stroke="#000" stroke-width="2"/><path d="M66 117v7h-7M63 122l3 2" stroke="#000" fill="none"/><path d="M85.5 109l2.5 2.5-2.5 2.5-2.5-2.5zM85.5 119l2.5 2.5-2.5 2.5-2.5-2.5zM80.5 114l2.5 2.5-2.5 2.5-2.5-2.5zM90.5 114l2.5 2.5-2.5 2.5-2.5-2.5z" fill="none" stroke="#000" stroke-width="1.1"/><path d="M85.5 114v5M83 116.5h5" stroke="#000" stroke-dasharray="1 1"/><path d="M106 112h4v11h10M114 112v10" stroke="#000" fill="none"/><path d="M114 112v10" stroke="#000" stroke-dasharray="1 1"/><path d="M105 116h4M107 114l2 2-2 2M105 120h4M107 118l2 2-2 2M117 114h3M118.5 112.5v3M117 119h3M118.5 117.5v3" stroke="#000" fill="none"/><rect x="138" y="109" width="9" height="16" fill="#000"/><circle cx="142.5" cy="112" r="2.5" fill="#ff0000"/><circle cx="142.5" cy="117" r="1.8" fill="#e0e000"/><circle cx="142.5" cy="121.5" r="1.8" fill="#00c000"/><path d="M149.5 112v9l5-4.5z" fill="#fff" stroke="#000"/><path d="M147 114h2M147 120h2" stroke="#60c0ff"/><path d="M183.5 107v10" stroke="#e8c000" stroke-width="2.5"/><path d="M184.7 107v10" stroke="#000" stroke-width=".6"/><rect x="178.5" y="117.5" width="12" height="4" fill="#ffe000" stroke="#504000"/><path d="M189 107v5M186.5 109.5h5" stroke="#504000" stroke-width="1.2"/><path d="M205.5 107v10" stroke="#e8c000" stroke-width="2.5"/><path d="M206.7 107v10" stroke="#000" stroke-width=".6"/><rect x="200.5" y="117.5" width="12" height="4" fill="#ffe000" stroke="#504000"/><path d="M208 109.5h7" stroke="#504000" stroke-width="1.2"/><path d="M222 108.5h6v12h10" stroke="#008000" fill="none"/><path d="M229 114l4-4v2.5h4v3h-4v2.5z" fill="#4010e0"/><path d="M244 120.5h10v-12h6" stroke="#008000" fill="none"/><path d="M253 114l-4-4v2.5h-4v3h4v2.5z" fill="#4010e0"/><path d="M266 108.5h5v12h10" stroke="#008000" fill="none"/><path d="M268 112h6l-3 3z" fill="#4010e0"/><path d="M273 117l2.5-2.5v5zM275 116.5h5" fill="#4010e0" stroke="#4010e0"/><path d="M288 108.5h8v12h8" stroke="#008000" fill="none"/><path d="M293 112h6l-3 3z" fill="#4010e0"/><path d="M296 117l-2.5-2.5v5zM289 116.5h5" fill="#4010e0" stroke="#4010e0"/><path d="M310 120.5h6v-12h10" stroke="#008000" fill="none"/><path d="M313 112h6l-3-3z" fill="#4010e0"/><path d="M318 117l2.5-2.5v5zM320 116.5h5" fill="#4010e0" stroke="#4010e0"/><path d="M332 120.5h10v-12h6" stroke="#008000" fill="none"/><path d="M339 112h6l-3-3z" fill="#4010e0"/><path d="M341 117l-2.5-2.5v5zM334 116.5h5" fill="#4010e0" stroke="#4010e0"/><path d="M372 109h3.5q3 0 3.5 3l.5 2.5-.5 2.5q-.5 3-3.5 3h-3.5M372 114.5h6" stroke="#000" fill="none" stroke-width="2"/><path d="M379 114.5l5-5v3h4v4h-4v3z" fill="#1060ff"/><path d="M394 114h5l-2.5 3z" fill="#000"/><path d="M418 109h-3.5q-3 0-3.5 3l-.5 2.5.5 2.5q.5 3 3.5 3h3.5M418 114.5h-6" stroke="#000" fill="none" stroke-width="2"/><path d="M411 114.5l-5-5v3h-4v4h4v3z" fill="#1060ff"/><path d="M425 114h5l-2.5 3z" fill="#000"/><rect x="434.5" y="108.5" width="3" height="3" fill="#fff" stroke="#000"/><rect x="434.5" y="114.5" width="3" height="3" fill="#fff" stroke="#000"/><rect x="434.5" y="120.5" width="3" height="3" fill="#fff" stroke="#000"/><path d="M438 110h4v3M438 116h3M438 122h4v-3M447 116h3" stroke="#000" fill="none"/><path d="M442 112l4 4-4 4-4-4z" fill="#000"/><path d="M442 113.5v5M439.5 116h5" stroke="#00ff00" stroke-width="1.2"/><rect x="449" y="114.5" width="3" height="3" fill="#00f"/><path d="M632 113h10l-5 5z" fill="#000"/><path d="M652 120v-7l2-4h3l1 3h1l1-3h3l2 4v7h-4v-3h-5v3z" fill="#a0a0a0" stroke="#606060" stroke-width=".7" stroke-dasharray="1 1"/><path d="M650 121l3-2 3 2-3 2zM650 121h6" stroke="#1010ff" fill="none" stroke-dasharray="1 1"/><path d="M669 120v-7l2-4h3l1 3h1l1-3h3l2 4v7h-4v-3h-5v3z" fill="#a0a0a0" stroke="#606060" stroke-width=".7" stroke-dasharray="1 1"/><path d="M679 121l3-2 3 2-3 2zM679 121h6" stroke="#1010ff" fill="none" stroke-dasharray="1 1"/><rect x="692" y="113" width="7" height="7" fill="#404050"/><path d="M693 110h2v3M697 110h2v3" stroke="#404050"/><path d="M697 123l7-7" stroke="#70a0e0" stroke-width="3.5" stroke-linecap="round"/><circle cx="704" cy="114" r="3" fill="#a0a8b0"/><path d="M743 117l5 5" stroke="#0010c0" stroke-width="3"/><circle cx="740" cy="114" r="5" fill="#fff" stroke="#000" stroke-width="1.5"/><path d="M740 111v6M737 114h6" stroke="#000" stroke-width="1.6"/><path d="M765 117l5 5" stroke="#0010c0" stroke-width="3"/><circle cx="762" cy="114" r="5" fill="#fff" stroke="#000" stroke-width="1.5"/><path d="M759 114h6" stroke="#000" stroke-width="1.6"/><path d="M787 117l5 5" stroke="#0010c0" stroke-width="3"/><circle cx="784" cy="114" r="5" fill="#003a80" stroke="#000" stroke-width="1.5"/><rect x="800.5" y="120.5" width="9" height="3" fill="none" stroke="#40d0ff"/><path d="M809 117l5 5" stroke="#0010c0" stroke-width="3"/><circle cx="806" cy="114" r="5" fill="#fff" stroke="#000" stroke-width="1.5"/><path d="M806 111v6M803 114h6" stroke="#000" stroke-width="1.6"/><path d="M821.5 109.5h8l2 2M821.5 109.5v10h3" fill="none" stroke="#0000a0" stroke-dasharray="1 1"/><path d="M828 115l4 4 4-1 1 1" fill="#c0c0c0" stroke="#606060" stroke-width="1.5" stroke-dasharray="1 1"/><path d="M833 120l3 3" stroke="#0000c0" stroke-width="1.4"/><path d="M870.5 111v13M864 124.5h14" stroke="#008000"/><rect x="893" y="109" width="7" height="15" fill="#2020a0"/><path d="M888 123.5h5v-13h6v13h5" stroke="#008000" fill="none"/><rect x="915" y="109" width="15" height="15" fill="#004000"/><path d="M915 123.5h2v-13h4v13h3v-13h4v13h2" stroke="#00c000" fill="none"/><rect x="950" y="109" width="16" height="15" fill="#3050a0" opacity=".85"/><rect x="950" y="109" width="16" height="15" fill="url(#dith)"/><path d="M973 123h4v-13h10" stroke="#00a000" stroke-dasharray="1 1" fill="none"/><rect x="977" y="110" width="4" height="13" fill="#3050a0" opacity=".8"/><path d="M977.5 110v13" stroke="#ffff00" stroke-dasharray="1 1"/><path d="M995 123h5v-13h9" stroke="#00a000" stroke-dasharray="1 1" fill="none"/><path d="M1016 123h5v-13h10" stroke="#00a000" stroke-dasharray="1 1" fill="none"/><path d="M1021.5 110v13" stroke="#ffff00" stroke-dasharray="1 1"/><defs><pattern id="dith" width="2" height="2" patternUnits="userSpaceOnUse"><rect x="0" y="0" width="1" height="1" fill="#fff" opacity=".5"/><rect x="1" y="1" width="1" height="1" fill="#fff" opacity=".5"/></pattern></defs></svg>
</body></html>
